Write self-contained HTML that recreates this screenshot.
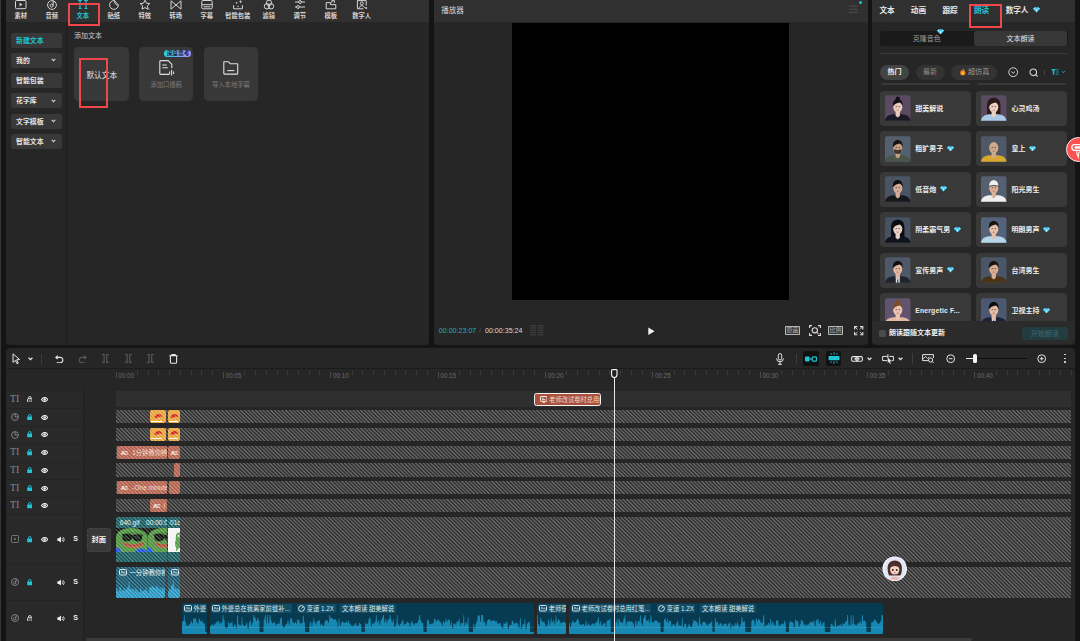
<!DOCTYPE html>
<html lang="zh-CN"><head><meta charset="utf-8"><title>剪映</title>
<style>
html,body{margin:0;padding:0;background:#141414}
body{width:1080px;height:641px;overflow:hidden;position:relative;background:#141414;font-family:"Liberation Sans","Noto Sans CJK SC",sans-serif;-webkit-font-smoothing:antialiased}
div,svg{position:absolute;box-sizing:border-box}
.t{white-space:nowrap;overflow:visible}
.hatch{background-image:repeating-linear-gradient(45deg,rgba(255,255,255,0) 0,rgba(255,255,255,0) .95px,rgba(255,255,255,.25) 1.45px,rgba(255,255,255,.25) 2.15px,rgba(255,255,255,0) 2.65px)}
.clip{overflow:hidden;border-radius:2px}
</style></head><body>

<div style="left:0px;top:0px;width:1px;height:641px;background:#37373a"></div>
<div style="left:5.5px;top:0px;width:423.6px;height:344.5px;background:#262626;border-radius:0 0 4px 4px"></div>
<div style="left:5.5px;top:0px;width:423.6px;height:22px;background:#303030"></div>
<div style="left:66px;top:22px;width:1px;height:322px;background:#1e1e1e"></div>
<svg style="left:14.7px;top:0px;" width="12" height="10.5" viewBox="0 0 12 10.5"><rect x="0.5" y="0.5" width="10.5" height="8.2" rx="1" fill="none" stroke="#d6d6d6"/><path d="M4.6 2.8 L7.4 4.6 L4.6 6.4Z" fill="#d6d6d6"/></svg>
<div class="t" style="left:0.7px;top:12.2px;width:40px;text-align:center;height:8px;line-height:8px;font-size:6.25px;color:#d6d6d6;font-weight:700;">素材</div>
<svg style="left:45.7px;top:0px;" width="12" height="10.5" viewBox="0 0 12 10.5"><circle cx="6" cy="5" r="4.4" fill="none" stroke="#d6d6d6"/><circle cx="5.6" cy="5.6" r="1.5" fill="none" stroke="#d6d6d6"/><path d="M7.1 5.6V1.2l2 .9" fill="none" stroke="#d6d6d6"/></svg>
<div class="t" style="left:31.7px;top:12.2px;width:40px;text-align:center;height:8px;line-height:8px;font-size:6.25px;color:#d6d6d6;font-weight:700;">音频</div>
<svg style="left:76.7px;top:0px;" width="12" height="10.5" viewBox="0 0 12 10.5"><path d="M1 0.3h4M3 0.3v8.2M1.6 8.5h2.8M7 0.3h4M9 0.3v8.2M7.6 8.5h2.8" fill="none" stroke="#1fc4d6" stroke-width="1.2"/></svg>
<div class="t" style="left:62.7px;top:12.2px;width:40px;text-align:center;height:8px;line-height:8px;font-size:6.25px;color:#1fc4d6;font-weight:700;">文本</div>
<svg style="left:107.7px;top:0px;" width="12" height="10.5" viewBox="0 0 12 10.5"><path d="M6.5 0.6A4.4 4.4 0 1 0 10.4 5 C8 5.4 6.2 3.4 6.5 0.6Z" fill="none" stroke="#d6d6d6"/><path d="M6.5 0.6L10.4 5" fill="none" stroke="#d6d6d6"/></svg>
<div class="t" style="left:93.7px;top:12.2px;width:40px;text-align:center;height:8px;line-height:8px;font-size:6.25px;color:#d6d6d6;font-weight:700;">贴纸</div>
<svg style="left:138.7px;top:0px;" width="12" height="10.5" viewBox="0 0 12 10.5"><path d="M6 0.2l1.5 3 3.3.4-2.4 2.3.6 3.3L6 7.6 3 9.2l.6-3.3L1.2 3.6l3.3-.4Z" fill="none" stroke="#d6d6d6" stroke-linejoin="round"/><path d="M9.3 8.6l1 1" stroke="#d6d6d6"/></svg>
<div class="t" style="left:124.7px;top:12.2px;width:40px;text-align:center;height:8px;line-height:8px;font-size:6.25px;color:#d6d6d6;font-weight:700;">特效</div>
<svg style="left:169.7px;top:0px;" width="12" height="10.5" viewBox="0 0 12 10.5"><path d="M1 0.8v8.4l10-8.4v8.4Z" fill="none" stroke="#d6d6d6" stroke-linejoin="round"/></svg>
<div class="t" style="left:155.7px;top:12.2px;width:40px;text-align:center;height:8px;line-height:8px;font-size:6.25px;color:#d6d6d6;font-weight:700;">转场</div>
<svg style="left:200.7px;top:0px;" width="12" height="10.5" viewBox="0 0 12 10.5"><rect x="0.8" y="0.5" width="10.4" height="8.3" rx="1" fill="none" stroke="#d6d6d6"/><path d="M0.8 4.7h10.4M2.6 6.8h6.8" stroke="#d6d6d6"/></svg>
<div class="t" style="left:186.7px;top:12.2px;width:40px;text-align:center;height:8px;line-height:8px;font-size:6.25px;color:#d6d6d6;font-weight:700;">字幕</div>
<svg style="left:231.7px;top:0px;" width="12" height="10.5" viewBox="0 0 12 10.5"><path d="M1.6 5.2v3.6h8.8V5.2" fill="none" stroke="#d6d6d6"/><path d="M8.6 0l.5 1.3 1.3.5-1.3.5-.5 1.3-.5-1.3-1.3-.5 1.3-.5ZM4.6 1.6l.4.9.9.4-.9.4-.4.9-.4-.9-.9-.4.9-.4ZM6 5.4l.3.7.7.3-.7.3-.3.7-.3-.7-.7-.3.7-.3Z" fill="#d6d6d6"/></svg>
<div class="t" style="left:217.7px;top:12.2px;width:40px;text-align:center;height:8px;line-height:8px;font-size:6.25px;color:#d6d6d6;font-weight:700;">智能包装</div>
<svg style="left:262.7px;top:0px;" width="12" height="10.5" viewBox="0 0 12 10.5"><circle cx="6" cy="2.8" r="2.7" fill="none" stroke="#d6d6d6"/><circle cx="4" cy="6.3" r="2.7" fill="none" stroke="#d6d6d6"/><circle cx="8" cy="6.3" r="2.7" fill="none" stroke="#d6d6d6"/></svg>
<div class="t" style="left:248.7px;top:12.2px;width:40px;text-align:center;height:8px;line-height:8px;font-size:6.25px;color:#d6d6d6;font-weight:700;">滤镜</div>
<svg style="left:293.7px;top:0px;" width="12" height="10.5" viewBox="0 0 12 10.5"><path d="M1 2h3.6M7.4 2H11M1 7h1.6M5.4 7H11" stroke="#d6d6d6"/><circle cx="6" cy="2" r="1.4" fill="none" stroke="#d6d6d6"/><circle cx="4" cy="7" r="1.4" fill="none" stroke="#d6d6d6"/></svg>
<div class="t" style="left:279.7px;top:12.2px;width:40px;text-align:center;height:8px;line-height:8px;font-size:6.25px;color:#d6d6d6;font-weight:700;">调节</div>
<svg style="left:324.7px;top:0px;" width="12" height="10.5" viewBox="0 0 12 10.5"><path d="M1.2 2.6h4.2v2h5.4v4.2H1.2Z" fill="none" stroke="#d6d6d6" stroke-linejoin="round"/><path d="M6.8 2.8V0.6h2.6v2.2" fill="none" stroke="#d6d6d6"/></svg>
<div class="t" style="left:310.7px;top:12.2px;width:40px;text-align:center;height:8px;line-height:8px;font-size:6.25px;color:#d6d6d6;font-weight:700;">模板</div>
<svg style="left:355.7px;top:0px;" width="12" height="10.5" viewBox="0 0 12 10.5"><path d="M10.2 5.6V0.6H1.4v8.2h6" fill="none" stroke="#d6d6d6"/><circle cx="5.8" cy="3.4" r="1.5" fill="none" stroke="#d6d6d6"/><path d="M3 8.6c.2-2 1.4-2.8 2.8-2.8s2.4.8 2.8 2" fill="none" stroke="#d6d6d6"/><circle cx="10.2" cy="8" r="1" fill="#d6d6d6"/></svg>
<div class="t" style="left:341.7px;top:12.2px;width:40px;text-align:center;height:8px;line-height:8px;font-size:6.25px;color:#d6d6d6;font-weight:700;">数字人</div>
<div style="left:11px;top:32.5px;width:50.5px;height:15px;background:#383838;border-radius:2.5px"></div>
<div class="t" style="left:16px;top:36.5px;height:8px;line-height:8px;font-size:6.9px;color:#1fc4d6;font-weight:700;">新建文本</div>
<div style="left:11px;top:52.75px;width:50.5px;height:15px;background:#383838;border-radius:2.5px"></div>
<div class="t" style="left:16px;top:56.75px;height:8px;line-height:8px;font-size:6.9px;color:#e4e4e4;font-weight:700;">我的</div>
<svg style="left:51px;top:58.25px;" width="5" height="4" viewBox="0 0 5 4"><path d="M0.7 0.8L2.5 2.6 4.3 0.8" fill="none" stroke="#ccc" stroke-width="1.2"/></svg>
<div style="left:11px;top:73px;width:50.5px;height:15px;background:#383838;border-radius:2.5px"></div>
<div class="t" style="left:16px;top:77px;height:8px;line-height:8px;font-size:6.9px;color:#e4e4e4;font-weight:700;">智能包装</div>
<div style="left:11px;top:93.25px;width:50.5px;height:15px;background:#383838;border-radius:2.5px"></div>
<div class="t" style="left:16px;top:97.25px;height:8px;line-height:8px;font-size:6.9px;color:#e4e4e4;font-weight:700;">花字库</div>
<svg style="left:51px;top:98.75px;" width="5" height="4" viewBox="0 0 5 4"><path d="M0.7 0.8L2.5 2.6 4.3 0.8" fill="none" stroke="#ccc" stroke-width="1.2"/></svg>
<div style="left:11px;top:113.5px;width:50.5px;height:15px;background:#383838;border-radius:2.5px"></div>
<div class="t" style="left:16px;top:117.5px;height:8px;line-height:8px;font-size:6.9px;color:#e4e4e4;font-weight:700;">文字模板</div>
<svg style="left:51px;top:119px;" width="5" height="4" viewBox="0 0 5 4"><path d="M0.7 0.8L2.5 2.6 4.3 0.8" fill="none" stroke="#ccc" stroke-width="1.2"/></svg>
<div style="left:11px;top:133.75px;width:50.5px;height:15px;background:#383838;border-radius:2.5px"></div>
<div class="t" style="left:16px;top:137.75px;height:8px;line-height:8px;font-size:6.9px;color:#e4e4e4;font-weight:700;">智能文本</div>
<svg style="left:51px;top:139.25px;" width="5" height="4" viewBox="0 0 5 4"><path d="M0.7 0.8L2.5 2.6 4.3 0.8" fill="none" stroke="#ccc" stroke-width="1.2"/></svg>
<div class="t" style="left:74px;top:31px;height:9px;line-height:9px;font-size:7px;color:#c8c8c8;font-weight:400;">添加文本</div>
<div style="left:74px;top:46.7px;width:54.6px;height:54.4px;background:#383838;border-radius:4.5px"></div>
<div style="left:138.8px;top:46.7px;width:54.6px;height:54.4px;background:#383838;border-radius:4.5px"></div>
<div style="left:203.6px;top:46.7px;width:54.6px;height:54.4px;background:#383838;border-radius:4.5px"></div>
<div class="t" style="left:74px;top:70.8px;width:54.6px;text-align:center;height:10px;line-height:10px;font-size:7.7px;color:#e6e6e6;font-weight:400;padding-left:1px;">默认文本</div>
<div style="left:164px;top:49.6px;width:27px;height:7.3px;background:linear-gradient(90deg,#25d6f2,#7fa6f6 60%,#b08cf6);border-radius:3.5px"></div>
<div class="t" style="left:163.5px;top:49.6px;width:28px;height:7.3px;line-height:7.3px;font-size:6px;font-weight:700;color:#0c1c3c;text-align:center;transform:scale(.96,.96)">深度思考</div>
<svg style="left:159px;top:60px;" width="16" height="16" viewBox="0 0 16 16"><path d="M10.6 14.4H1.6a.8.8 0 0 1-.8-.8V1.4a.8.8 0 0 1 .8-.8h7.6l3.6 3.6v4" fill="none" stroke="#ddd" stroke-width="1.1"/><path d="M3.4 5h4.4M3.4 7.8h5.4" stroke="#ddd" stroke-width="1.1"/><path d="M10.6 11.6v2.4M12.6 10v5.6M14.6 11.6v2.4" stroke="#ddd" stroke-width="1.1"/></svg>
<div class="t" style="left:138.8px;top:79.9px;width:54.6px;text-align:center;height:9px;line-height:9px;font-size:6.3px;color:#7b7b7b;font-weight:400;">添加口播稿</div>
<svg style="left:223px;top:61px;" width="16" height="14" viewBox="0 0 16 14"><path d="M0.8 12.6V1.2a.5.5 0 0 1 .5-.5h4.2l1.6 2h7.1a.5.5 0 0 1 .5.5v9.4a.5.5 0 0 1-.5.5H1.3a.5.5 0 0 1-.5-.5Z" fill="none" stroke="#ddd" stroke-width="1.1"/><path d="M4.2 9.6h7.2" stroke="#ddd" stroke-width="1.1"/></svg>
<div class="t" style="left:203.6px;top:79.9px;width:54.6px;text-align:center;height:9px;line-height:9px;font-size:6.3px;color:#7b7b7b;font-weight:400;">导入本地字幕</div>
<div style="left:68px;top:3.3px;width:32px;height:22.4px;border:2px solid #f0474d"></div>
<div style="left:78.6px;top:57.6px;width:29.6px;height:50px;border:2px solid #f0474d"></div>
<div style="left:433.6px;top:0px;width:434.8px;height:344.5px;background:#262626;border-radius:0 0 4px 4px"></div>
<div style="left:433.6px;top:0px;width:434.8px;height:22px;background:#303030"></div>
<div class="t" style="left:441.3px;top:5.8px;height:10px;line-height:10px;font-size:7.5px;color:#d8d8d8;font-weight:400;">播放器</div>
<svg style="left:849px;top:5px;" width="9" height="9" viewBox="0 0 9 9"><path d="M0 1h8.6M0 4.2h8.6M0 7.4h8.6" stroke="#4c4c4c" stroke-width="1.1"/></svg>
<div style="left:859px;top:1px;width:3.4px;height:3.4px;background:#1fc4d6;border-radius:50%"></div>
<div style="left:512.2px;top:22.6px;width:277px;height:277.5px;background:#000"></div>
<div class="t" style="left:438.8px;top:325.5px;height:10px;line-height:10px;font-size:7.1px;color:#27a9b8;font-weight:400;">00:00:23:07</div>
<div class="t" style="left:479px;top:325.5px;height:10px;line-height:10px;font-size:7.1px;color:#555;font-weight:400;">/</div>
<div class="t" style="left:485px;top:325.5px;height:10px;line-height:10px;font-size:7.1px;color:#d8d8d8;font-weight:400;">00:00:35:24</div>
<svg style="left:530px;top:325px;" width="14" height="11.5" viewBox="0 0 14 11.5"><rect x="0" y="0" width="6" height="1.4" fill="#3b3b3b"/><rect x="0" y="2.3" width="6" height="1.4" fill="#3b3b3b"/><rect x="0" y="4.6" width="6" height="1.4" fill="#3b3b3b"/><rect x="0" y="6.9" width="6" height="1.4" fill="#3b3b3b"/><rect x="0" y="9.2" width="6" height="1.4" fill="#3b3b3b"/><rect x="7.5" y="0" width="6" height="1.4" fill="#3b3b3b"/><rect x="7.5" y="2.3" width="6" height="1.4" fill="#3b3b3b"/><rect x="7.5" y="4.6" width="6" height="1.4" fill="#3b3b3b"/><rect x="7.5" y="6.9" width="6" height="1.4" fill="#3b3b3b"/><rect x="7.5" y="9.2" width="6" height="1.4" fill="#3b3b3b"/></svg>
<svg style="left:648px;top:326.6px;" width="7" height="8.4" viewBox="0 0 7 8.4"><path d="M0.3 0.4L6.6 4.2 0.3 8Z" fill="#f2f2f2"/></svg>
<div class="t" style="left:785px;top:326px;width:15px;height:9px;border:1px solid #b4b4b4;border-radius:.8px;font-size:6px;line-height:7px;color:#b0b0b0;background:#3a3a3a;text-align:center">原画</div>
<svg style="left:808.5px;top:325px;" width="12" height="11" viewBox="0 0 12 11"><path d="M0.6 3V0.6H3M9 0.6h2.4V3M11.4 8v2.4H9M3 10.4H0.6V8" fill="none" stroke="#ddd" stroke-width="1.1"/><circle cx="5.8" cy="5.3" r="2.6" fill="none" stroke="#ddd" stroke-width="1.1"/><path d="M7.8 7.3l1.5 1.5" stroke="#ddd" stroke-width="1.1"/></svg>
<div class="t" style="left:828px;top:326px;width:15px;height:9px;border:1px solid #b4b4b4;border-radius:.8px;font-size:6px;line-height:7px;color:#b0b0b0;background:#3a3a3a;text-align:center">比例</div>
<svg style="left:854px;top:326px;" width="9.5" height="9.5" viewBox="0 0 9.5 9.5"><path d="M0.6 3.4V0.6h2.8M6 0.6h2.8v2.8M8.8 6v2.8H6M3.4 8.8H0.6V6" fill="none" stroke="#ddd" stroke-width="1.1"/><path d="M0.9 0.9l2.6 2.6M8.5 0.9L5.9 3.5M8.5 8.5L5.9 5.9M0.9 8.5l2.6-2.6" stroke="#ddd" stroke-width="0.9"/></svg>
<div style="left:872px;top:0px;width:203px;height:344.5px;background:#262626;border-radius:0 0 4px 4px"></div>
<div style="left:872px;top:0px;width:203px;height:22px;background:#303030"></div>
<div class="t" style="left:879.5px;top:5.5px;height:10px;line-height:10px;font-size:7.6px;color:#e8e8e8;font-weight:700;">文本</div>
<div class="t" style="left:910.8px;top:5.5px;height:10px;line-height:10px;font-size:7.6px;color:#e8e8e8;font-weight:700;">动画</div>
<div class="t" style="left:942.5px;top:5.5px;height:10px;line-height:10px;font-size:7.6px;color:#e8e8e8;font-weight:700;">跟踪</div>
<div class="t" style="left:974px;top:5.5px;height:10px;line-height:10px;font-size:7.6px;color:#1fc4d6;font-weight:700;">朗读</div>
<div class="t" style="left:1005.7px;top:5.5px;height:10px;line-height:10px;font-size:7.6px;color:#e8e8e8;font-weight:700;">数字人</div>
<svg style="left:1032.5px;top:6.8px;" width="7" height="5.8" viewBox="0 0 7 5.8"><path d="M1.6 0.3h3.8L7 2.1 3.5 5.6 0 2.1Z" fill="#39c8f5"/><path d="M1.6 0.3L2.4 2.1H0ZM5.4 0.3L4.6 2.1H7Z" fill="#8fe4ff"/><path d="M2.4 2.1h2.2L3.5 5.6Z" fill="#b8efff"/></svg>
<div style="left:969px;top:3.5px;width:33px;height:24.5px;border:2px solid #f0474d"></div>
<div style="left:880px;top:31px;width:187.5px;height:15px;background:#1a1a1a;border-radius:2.5px"></div>
<div style="left:973.7px;top:31px;width:93.8px;height:15px;background:#383838;border-radius:2.5px"></div>
<div class="t" style="left:880px;top:34px;width:93.7px;text-align:center;height:9.5px;line-height:9.5px;font-size:7px;color:#9a9a9a;font-weight:400;">克隆音色</div>
<div class="t" style="left:973.7px;top:34px;width:93.8px;text-align:center;height:9.5px;line-height:9.5px;font-size:7px;color:#e6e6e6;font-weight:400;">文本朗读</div>
<svg style="left:936.9px;top:28.6px;" width="7" height="5.8" viewBox="0 0 7 5.8"><path d="M1.6 0.3h3.8L7 2.1 3.5 5.6 0 2.1Z" fill="#39c8f5"/><path d="M1.6 0.3L2.4 2.1H0ZM5.4 0.3L4.6 2.1H7Z" fill="#8fe4ff"/><path d="M2.4 2.1h2.2L3.5 5.6Z" fill="#b8efff"/></svg>
<div style="left:880px;top:53.3px;width:187.5px;height:1px;background:#383838"></div>
<div style="left:880px;top:64.5px;width:29.2px;height:15.4px;background:#434343;border-radius:8px"></div>
<div class="t" style="left:880px;top:67.2px;width:29.2px;text-align:center;height:10px;line-height:10px;font-size:7px;color:#f0f0f0;font-weight:700;">热门</div>
<div style="left:915.5px;top:64.5px;width:29.2px;height:15.4px;background:#333;border-radius:8px"></div>
<div class="t" style="left:915.5px;top:67.2px;width:29.2px;text-align:center;height:10px;line-height:10px;font-size:7px;color:#8c8c8c;font-weight:400;">最新</div>
<div style="left:951px;top:64.5px;width:45.6px;height:15.4px;background:#333;border-radius:8px"></div>
<svg style="left:960.2px;top:68.4px;" width="5.6" height="7.35" viewBox="0 0 6.4 8.4"><path d="M3.4 0.2C3.8 2 6.2 3 6.2 5.4A3 3 0 0 1 0.2 5.4C0.2 3.8 1.2 3.2 1.6 2.2 2.2 3 2.4 3.4 2.6 3.4 3.2 2.6 2.8 1.2 3.4 0.2Z" fill="#f6831f"/><path d="M3.2 4.4C4 5.2 4.6 5.8 4.4 6.8A1.3 1.3 0 0 1 1.9 6.8C1.8 5.8 2.6 5.4 3.2 4.4Z" fill="#ffc53d"/></svg>
<div class="t" style="left:968px;top:67.2px;height:10px;line-height:10px;font-size:7.1px;color:#9c9c9c;font-weight:400;">超仿真</div>
<svg style="left:1007.5px;top:67px;" width="10.4" height="10.4" viewBox="0 0 10.4 10.4"><circle cx="5.2" cy="5.2" r="4.4" fill="none" stroke="#d4d4d4" stroke-width="1"/><path d="M3.4 4.6l1.8 1.7 1.8-1.7" fill="none" stroke="#d4d4d4" stroke-width="1"/></svg>
<svg style="left:1029.3px;top:67.7px;" width="10.5" height="10.5" viewBox="0 0 10.5 10.5"><circle cx="4.3" cy="4.3" r="3.3" fill="none" stroke="#d4d4d4" stroke-width="1.05"/><path d="M6.7 6.7l1.9 1.9" stroke="#d4d4d4" stroke-width="1.05"/></svg>
<div style="left:1044px;top:70px;width:0.9px;height:4.6px;background:#444"></div>
<svg style="left:1051px;top:69.1px;" width="15" height="6.4" viewBox="0 0 15 6.4"><path d="M0 0h5L3.3 2.2V5.8H1.7V2.2Z" fill="#1fb0c2"/><path d="M5 .8h2.6M4.6 3h3.2M4.6 5.2h3.2" stroke="#1fb0c2" stroke-width=".75"/><path d="M11 2.2l1.5 1.5 1.5-1.5" fill="none" stroke="#1fb0c2" stroke-width="1"/></svg>
<div style="left:872px;top:82.5px;width:203px;height:238.3px;overflow:hidden">
<div style="left:8px;top:-32.5px;width:91px;height:35px;background:#393939;border-radius:4px"></div>
<div style="left:104.2px;top:-32.5px;width:91.3px;height:35px;background:#393939;border-radius:4px"></div>
<div style="left:8px;top:8px;width:91px;height:35px;background:#393939;border-radius:4px"></div>
<svg style="left:13px;top:12.5px;" width="25.5" height="26" viewBox="0 0 26 26"><rect width="26" height="26" rx="2" fill="#5c4a63"/><path d="M0 26c.3-4 3.3-5.8 8.5-6.6h9c5.2.8 8.2 2.6 8.5 6.6Z" fill="#1a1a26"/><path d="M10.8 16.5h4.4v4.3l-2.2 1.8-2.2-1.8Z" fill="#e9c9bd"/><ellipse cx="13" cy="11.8" rx="4.7" ry="5.9" fill="#e9c9bd"/><path d="M8.1 11.8c-.7-5.8 2.1-8 4.9-8s5.6 2.2 4.9 8c-.7-2.8-1.6-3.9-3.2-4.3-1.8.7-4.7.7-6.6 4.3Z" fill="#14101a"/><circle cx="13" cy="3.6" r="2.2" fill="#14101a"/><path d="M10.8 11.6h1.4M13.8 11.6h1.4" stroke="#2a1a1a" stroke-width=".7"/><path d="M12 15.2h2" stroke="#a8524a" stroke-width=".7"/></svg>
<div class="t" style="left:43.2px;top:21px;height:10px;line-height:10px;font-size:7px;color:#ececec;font-weight:700;">甜美解说</div>
<div style="left:104.2px;top:8px;width:91.3px;height:35px;background:#393939;border-radius:4px"></div>
<svg style="left:109.2px;top:12.5px;" width="25.5" height="26" viewBox="0 0 26 26"><rect width="26" height="26" rx="2" fill="#5a4a62"/><path d="M6.2 11c0-6.4 3-8.4 6.8-8.4s6.8 2 6.8 8.4v9.5H6.2Z" fill="#2a1a18"/><path d="M0 26c.3-4 3.3-5.8 8.5-6.6h9c5.2.8 8.2 2.6 8.5 6.6Z" fill="#a9c9e6"/><path d="M10.8 16.5h4.4v4.3l-2.2 1.8-2.2-1.8Z" fill="#edd0c4"/><ellipse cx="13" cy="11.8" rx="4.7" ry="5.9" fill="#edd0c4"/><path d="M8.1 11.8c-.7-5.8 2.1-8 4.9-8s5.6 2.2 4.9 8c-.7-2.8-1.6-3.9-3.2-4.3-1.8.7-4.7.7-6.6 4.3Z" fill="#2a1a18"/><path d="M10.8 11.6h1.4M13.8 11.6h1.4" stroke="#2a1a1a" stroke-width=".7"/><path d="M12 15.2h2" stroke="#a8524a" stroke-width=".7"/></svg>
<div class="t" style="left:139.4px;top:21px;height:10px;line-height:10px;font-size:7px;color:#ececec;font-weight:700;">心灵鸡汤</div>
<div style="left:8px;top:48.5px;width:91px;height:35px;background:#393939;border-radius:4px"></div>
<svg style="left:13px;top:53px;" width="25.5" height="26" viewBox="0 0 26 26"><rect width="26" height="26" rx="2" fill="#55606e"/><path d="M0 26c.3-4 3.3-5.8 8.5-6.6h9c5.2.8 8.2 2.6 8.5 6.6Z" fill="#4a5448"/><path d="M10.8 16.5h4.4v4.3l-2.2 1.8-2.2-1.8Z" fill="#c89f84"/><ellipse cx="13" cy="11.8" rx="4.7" ry="5.9" fill="#c89f84"/><path d="M8.1 11.8c-.7-5.8 2.1-8 4.9-8s5.6 2.2 4.9 8c-.7-2.8-1.6-3.9-3.2-4.3-1.8.7-4.7.7-6.6 4.3Z" fill="#17130f"/><path d="M9 13c.5 4 2 5 4 5s3.5-1 4-5c-1.5 1.5-6.5 1.5-8 0Z" fill="#17130f" opacity=".8"/><path d="M10.8 11.6h1.4M13.8 11.6h1.4" stroke="#2a1a1a" stroke-width=".7"/><path d="M12 15.2h2" stroke="#a8524a" stroke-width=".7"/></svg>
<div class="t" style="left:43.2px;top:61.5px;height:10px;line-height:10px;font-size:7px;color:#ececec;font-weight:700;">粗犷男子</div>
<svg style="left:74.8px;top:63.1px" width="7" height="5.8" viewBox="0 0 7 5.8"><path d="M1.6 0.3h3.8L7 2.1 3.5 5.6 0 2.1Z" fill="#39c8f5"/><path d="M1.6 0.3L2.4 2.1H0ZM5.4 0.3L4.6 2.1H7Z" fill="#8fe4ff"/><path d="M2.4 2.1h2.2L3.5 5.6Z" fill="#b8efff"/></svg>
<div style="left:104.2px;top:48.5px;width:91.3px;height:35px;background:#393939;border-radius:4px"></div>
<svg style="left:109.2px;top:53px;" width="25.5" height="26" viewBox="0 0 26 26"><rect width="26" height="26" rx="2" fill="#4e5866"/><path d="M0 26c.3-4 3.3-5.8 8.5-6.6h9c5.2.8 8.2 2.6 8.5 6.6Z" fill="#d8a830"/><path d="M10.8 16.5h4.4v4.3l-2.2 1.8-2.2-1.8Z" fill="#cfa98c"/><ellipse cx="13" cy="11.8" rx="4.7" ry="5.9" fill="#cfa98c"/><path d="M10.8 11.6h1.4M13.8 11.6h1.4" stroke="#2a1a1a" stroke-width=".7"/><path d="M12 15.2h2" stroke="#a8524a" stroke-width=".7"/></svg>
<div class="t" style="left:139.4px;top:61.5px;height:10px;line-height:10px;font-size:7px;color:#ececec;font-weight:700;">皇上</div>
<svg style="left:157px;top:63.1px" width="7" height="5.8" viewBox="0 0 7 5.8"><path d="M1.6 0.3h3.8L7 2.1 3.5 5.6 0 2.1Z" fill="#39c8f5"/><path d="M1.6 0.3L2.4 2.1H0ZM5.4 0.3L4.6 2.1H7Z" fill="#8fe4ff"/><path d="M2.4 2.1h2.2L3.5 5.6Z" fill="#b8efff"/></svg>
<div style="left:8px;top:89px;width:91px;height:35px;background:#393939;border-radius:4px"></div>
<svg style="left:13px;top:93.5px;" width="25.5" height="26" viewBox="0 0 26 26"><rect width="26" height="26" rx="2" fill="#4a5463"/><path d="M0 26c.3-4 3.3-5.8 8.5-6.6h9c5.2.8 8.2 2.6 8.5 6.6Z" fill="#15171c"/><path d="M10.8 16.5h4.4v4.3l-2.2 1.8-2.2-1.8Z" fill="#d6ad94"/><ellipse cx="13" cy="11.8" rx="4.7" ry="5.9" fill="#d6ad94"/><path d="M8.1 11.8c-.7-5.8 2.1-8 4.9-8s5.6 2.2 4.9 8c-.7-2.8-1.6-3.9-3.2-4.3-1.8.7-4.7.7-6.6 4.3Z" fill="#0e0e12"/><path d="M10.8 11.6h1.4M13.8 11.6h1.4" stroke="#2a1a1a" stroke-width=".7"/><path d="M12 15.2h2" stroke="#a8524a" stroke-width=".7"/></svg>
<div class="t" style="left:43.2px;top:102px;height:10px;line-height:10px;font-size:7px;color:#ececec;font-weight:700;">低音炮</div>
<svg style="left:67.8px;top:103.6px" width="7" height="5.8" viewBox="0 0 7 5.8"><path d="M1.6 0.3h3.8L7 2.1 3.5 5.6 0 2.1Z" fill="#39c8f5"/><path d="M1.6 0.3L2.4 2.1H0ZM5.4 0.3L4.6 2.1H7Z" fill="#8fe4ff"/><path d="M2.4 2.1h2.2L3.5 5.6Z" fill="#b8efff"/></svg>
<div style="left:104.2px;top:89px;width:91.3px;height:35px;background:#393939;border-radius:4px"></div>
<svg style="left:109.2px;top:93.5px;" width="25.5" height="26" viewBox="0 0 26 26"><rect width="26" height="26" rx="2" fill="#566070"/><path d="M0 26c.3-4 3.3-5.8 8.5-6.6h9c5.2.8 8.2 2.6 8.5 6.6Z" fill="#eeeeee"/><path d="M10.8 16.5h4.4v4.3l-2.2 1.8-2.2-1.8Z" fill="#dcb195"/><ellipse cx="13" cy="11.8" rx="4.7" ry="5.9" fill="#dcb195"/><path d="M8.3 10.5c0-5 2.5-6.3 4.7-6.3s4.7 1.3 4.7 6.3c-3-1-6.4-1-9.4 0Z" fill="#f1f1f1"/><path d="M8 10.3c3.5-1.3 7.5-1.3 10.5.3" stroke="#222" stroke-width=".8" fill="none"/><path d="M10.8 11.6h1.4M13.8 11.6h1.4" stroke="#2a1a1a" stroke-width=".7"/><path d="M12 15.2h2" stroke="#a8524a" stroke-width=".7"/></svg>
<div class="t" style="left:139.4px;top:102px;height:10px;line-height:10px;font-size:7px;color:#ececec;font-weight:700;">阳光男生</div>
<div style="left:8px;top:129.5px;width:91px;height:35px;background:#393939;border-radius:4px"></div>
<svg style="left:13px;top:134px;" width="25.5" height="26" viewBox="0 0 26 26"><rect width="26" height="26" rx="2" fill="#465262"/><path d="M6.2 11c0-6.4 3-8.4 6.8-8.4s6.8 2 6.8 8.4v9.5H6.2Z" fill="#0a0c12"/><path d="M0 26c.3-4 3.3-5.8 8.5-6.6h9c5.2.8 8.2 2.6 8.5 6.6Z" fill="#10131c"/><path d="M10.8 16.5h4.4v4.3l-2.2 1.8-2.2-1.8Z" fill="#e6cfc6"/><ellipse cx="13" cy="11.8" rx="4.7" ry="5.9" fill="#e6cfc6"/><path d="M8.1 11.8c-.7-5.8 2.1-8 4.9-8s5.6 2.2 4.9 8c-.7-2.8-1.6-3.9-3.2-4.3-1.8.7-4.7.7-6.6 4.3Z" fill="#0a0c12"/><path d="M10.8 11.6h1.4M13.8 11.6h1.4" stroke="#2a1a1a" stroke-width=".7"/><path d="M12 15.2h2" stroke="#a8524a" stroke-width=".7"/></svg>
<div class="t" style="left:43.2px;top:142.5px;height:10px;line-height:10px;font-size:7px;color:#ececec;font-weight:700;">阴柔霸气男</div>
<svg style="left:81.8px;top:144.1px" width="7" height="5.8" viewBox="0 0 7 5.8"><path d="M1.6 0.3h3.8L7 2.1 3.5 5.6 0 2.1Z" fill="#39c8f5"/><path d="M1.6 0.3L2.4 2.1H0ZM5.4 0.3L4.6 2.1H7Z" fill="#8fe4ff"/><path d="M2.4 2.1h2.2L3.5 5.6Z" fill="#b8efff"/></svg>
<div style="left:104.2px;top:129.5px;width:91.3px;height:35px;background:#393939;border-radius:4px"></div>
<svg style="left:109.2px;top:134px;" width="25.5" height="26" viewBox="0 0 26 26"><rect width="26" height="26" rx="2" fill="#54627a"/><path d="M0 26c.3-4 3.3-5.8 8.5-6.6h9c5.2.8 8.2 2.6 8.5 6.6Z" fill="#b5d6e8"/><path d="M10.8 16.5h4.4v4.3l-2.2 1.8-2.2-1.8Z" fill="#e5bfa6"/><ellipse cx="13" cy="11.8" rx="4.7" ry="5.9" fill="#e5bfa6"/><path d="M8.1 11.8c-.7-5.8 2.1-8 4.9-8s5.6 2.2 4.9 8c-.7-2.8-1.6-3.9-3.2-4.3-1.8.7-4.7.7-6.6 4.3Z" fill="#15110f"/><path d="M10.8 11.6h1.4M13.8 11.6h1.4" stroke="#2a1a1a" stroke-width=".7"/><path d="M12 15.2h2" stroke="#a8524a" stroke-width=".7"/></svg>
<div class="t" style="left:139.4px;top:142.5px;height:10px;line-height:10px;font-size:7px;color:#ececec;font-weight:700;">明朗男声</div>
<svg style="left:171px;top:144.1px" width="7" height="5.8" viewBox="0 0 7 5.8"><path d="M1.6 0.3h3.8L7 2.1 3.5 5.6 0 2.1Z" fill="#39c8f5"/><path d="M1.6 0.3L2.4 2.1H0ZM5.4 0.3L4.6 2.1H7Z" fill="#8fe4ff"/><path d="M2.4 2.1h2.2L3.5 5.6Z" fill="#b8efff"/></svg>
<div style="left:8px;top:170px;width:91px;height:35px;background:#393939;border-radius:4px"></div>
<svg style="left:13px;top:174.5px;" width="25.5" height="26" viewBox="0 0 26 26"><rect width="26" height="26" rx="2" fill="#4f5866"/><path d="M0 26c.3-4 3.3-5.8 8.5-6.6h9c5.2.8 8.2 2.6 8.5 6.6Z" fill="#20242c"/><path d="M10.8 16.5h4.4v4.3l-2.2 1.8-2.2-1.8Z" fill="#e0b9a0"/><ellipse cx="13" cy="11.8" rx="4.7" ry="5.9" fill="#e0b9a0"/><path d="M8.1 11.8c-.7-5.8 2.1-8 4.9-8s5.6 2.2 4.9 8c-.7-2.8-1.6-3.9-3.2-4.3-1.8.7-4.7.7-6.6 4.3Z" fill="#0f0d0d"/><path d="M11 20.5l2 2.2 2-2.2v5.5h-4Z" fill="#e9e9ee"/><path d="M12.6 22.4h.8l.5 3.6h-1.8Z" fill="#2a3a5a"/><path d="M10.8 11.6h1.4M13.8 11.6h1.4" stroke="#2a1a1a" stroke-width=".7"/><path d="M12 15.2h2" stroke="#a8524a" stroke-width=".7"/></svg>
<div class="t" style="left:43.2px;top:183px;height:10px;line-height:10px;font-size:7px;color:#ececec;font-weight:700;">宣传男声</div>
<svg style="left:74.8px;top:184.6px" width="7" height="5.8" viewBox="0 0 7 5.8"><path d="M1.6 0.3h3.8L7 2.1 3.5 5.6 0 2.1Z" fill="#39c8f5"/><path d="M1.6 0.3L2.4 2.1H0ZM5.4 0.3L4.6 2.1H7Z" fill="#8fe4ff"/><path d="M2.4 2.1h2.2L3.5 5.6Z" fill="#b8efff"/></svg>
<div style="left:104.2px;top:170px;width:91.3px;height:35px;background:#393939;border-radius:4px"></div>
<svg style="left:109.2px;top:174.5px;" width="25.5" height="26" viewBox="0 0 26 26"><rect width="26" height="26" rx="2" fill="#4a5668"/><path d="M0 26c.3-4 3.3-5.8 8.5-6.6h9c5.2.8 8.2 2.6 8.5 6.6Z" fill="#4a3418"/><path d="M10.8 16.5h4.4v4.3l-2.2 1.8-2.2-1.8Z" fill="#d9ad90"/><ellipse cx="13" cy="11.8" rx="4.7" ry="5.9" fill="#d9ad90"/><path d="M8.1 11.8c-.7-5.8 2.1-8 4.9-8s5.6 2.2 4.9 8c-.7-2.8-1.6-3.9-3.2-4.3-1.8.7-4.7.7-6.6 4.3Z" fill="#1a120e"/><path d="M10.8 11.6h1.4M13.8 11.6h1.4" stroke="#2a1a1a" stroke-width=".7"/><path d="M12 15.2h2" stroke="#a8524a" stroke-width=".7"/></svg>
<div class="t" style="left:139.4px;top:183px;height:10px;line-height:10px;font-size:7px;color:#ececec;font-weight:700;">台湾男生</div>
<div style="left:8px;top:210.5px;width:91px;height:35px;background:#393939;border-radius:4px"></div>
<svg style="left:13px;top:215px;" width="25.5" height="26" viewBox="0 0 26 26"><rect width="26" height="26" rx="2" fill="#62546e"/><path d="M0 26c.3-4 3.3-5.8 8.5-6.6h9c5.2.8 8.2 2.6 8.5 6.6Z" fill="#e2b8a4"/><path d="M10.8 16.5h4.4v4.3l-2.2 1.8-2.2-1.8Z" fill="#ecc4b0"/><ellipse cx="13" cy="11.8" rx="4.7" ry="5.9" fill="#ecc4b0"/><path d="M8.1 11.8c-.7-5.8 2.1-8 4.9-8s5.6 2.2 4.9 8c-.7-2.8-1.6-3.9-3.2-4.3-1.8.7-4.7.7-6.6 4.3Z" fill="#7a4e2a"/><circle cx="13" cy="3.6" r="2.2" fill="#7a4e2a"/><path d="M10.8 11.6h1.4M13.8 11.6h1.4" stroke="#2a1a1a" stroke-width=".7"/><path d="M12 15.2h2" stroke="#a8524a" stroke-width=".7"/></svg>
<div class="t" style="left:43.2px;top:223.5px;height:10px;line-height:10px;font-size:6.8px;color:#ececec;font-weight:700;letter-spacing:.2px;">Energetic F...</div>
<div style="left:104.2px;top:210.5px;width:91.3px;height:35px;background:#393939;border-radius:4px"></div>
<svg style="left:109.2px;top:215px;" width="25.5" height="26" viewBox="0 0 26 26"><rect width="26" height="26" rx="2" fill="#4c5870"/><path d="M0 26c.3-4 3.3-5.8 8.5-6.6h9c5.2.8 8.2 2.6 8.5 6.6Z" fill="#1a2236"/><path d="M10.8 16.5h4.4v4.3l-2.2 1.8-2.2-1.8Z" fill="#e4bca4"/><ellipse cx="13" cy="11.8" rx="4.7" ry="5.9" fill="#e4bca4"/><path d="M8.1 11.8c-.7-5.8 2.1-8 4.9-8s5.6 2.2 4.9 8c-.7-2.8-1.6-3.9-3.2-4.3-1.8.7-4.7.7-6.6 4.3Z" fill="#0d0c0e"/><path d="M11 20.5l2 2.2 2-2.2v5.5h-4Z" fill="#e9e9ee"/><path d="M12.6 22.4h.8l.5 3.6h-1.8Z" fill="#2a3a5a"/><path d="M10.8 11.6h1.4M13.8 11.6h1.4" stroke="#2a1a1a" stroke-width=".7"/><path d="M12 15.2h2" stroke="#a8524a" stroke-width=".7"/></svg>
<div class="t" style="left:139.4px;top:223.5px;height:10px;line-height:10px;font-size:7px;color:#ececec;font-weight:700;">卫视主持</div>
<svg style="left:171px;top:225.1px" width="7" height="5.8" viewBox="0 0 7 5.8"><path d="M1.6 0.3h3.8L7 2.1 3.5 5.6 0 2.1Z" fill="#39c8f5"/><path d="M1.6 0.3L2.4 2.1H0ZM5.4 0.3L4.6 2.1H7Z" fill="#8fe4ff"/><path d="M2.4 2.1h2.2L3.5 5.6Z" fill="#b8efff"/></svg>
</div>
<div style="left:872px;top:320.8px;width:203px;height:23.7px;background:#2b2b2b;border-radius:0 0 4px 4px"></div>
<div style="left:878.8px;top:330px;width:7px;height:7px;background:#4b4b4b;border-radius:1.5px"></div>
<div class="t" style="left:889px;top:328.3px;height:10px;line-height:10px;font-size:7px;color:#f0f0f0;font-weight:700;">朗读跟随文本更新</div>
<div style="left:1022px;top:327px;width:45.5px;height:12.6px;background:#223c40;border-radius:2px"></div>
<div class="t" style="left:1022px;top:328.5px;width:45.5px;text-align:center;height:10px;line-height:10px;font-size:7px;color:#3f6a70;font-weight:400;">开始朗读</div>
<div style="left:1066px;top:136.5px;width:25.8px;height:25.8px;background:#fb5254;border:.9px solid #ffe9e9;border-radius:50%"></div>
<svg style="left:1070px;top:142.7px;" width="10" height="18" viewBox="0 0 10 18"><path d="M10 1.7H4.6a2.8 2.8 0 0 0 0 5.6H10" fill="none" stroke="#fff" stroke-width="1.3"/><path d="M10 3.3H5.6a1.2 1.2 0 0 0 0 2.4H10Z" fill="#fff"/><path d="M7 7.6c-.6 2.2-.2 4.2 1.4 6.2-.2-1.8 0-3.6 1.2-5.4" fill="none" stroke="#fff" stroke-width="1.1"/></svg>
<div style="left:5.5px;top:348px;width:1069.5px;height:300px;background:#262626;border-radius:4px 4px 0 0"></div>
<div style="left:5.5px;top:367.8px;width:1069.5px;height:1px;background:#1c1c1c"></div>
<svg style="left:11.5px;top:353.4px;" width="9" height="11" viewBox="0 0 9 11"><path d="M1 0.8l6.6 5.7-3 .3 1.7 3.4-1.3.6-1.6-3.4L1 9.4Z" fill="none" stroke="#e6e6e6" stroke-width="1" stroke-linejoin="round"/></svg>
<svg style="left:27.8px;top:357px;" width="5" height="4" viewBox="0 0 5 4"><path d="M0.6 0.8L2.5 2.7 4.4 0.8" fill="none" stroke="#e6e6e6" stroke-width="1.3"/></svg>
<div style="left:41px;top:354px;width:0.8px;height:9.5px;background:#3c3c3c"></div>
<svg style="left:55px;top:354.6px;" width="9" height="8.6" viewBox="0 0 9 8.6"><path d="M2.8 0.6L0.8 2.4l2 1.8M1 2.4h4.2a2.7 2.7 0 0 1 0 5.4H1.6" fill="none" stroke="#e6e6e6" stroke-width="1.1"/></svg>
<svg style="left:77.5px;top:354.6px;" width="9" height="8.6" viewBox="0 0 9 8.6"><path d="M6.2 0.6l2 1.8-2 1.8M8 2.4H3.8a2.7 2.7 0 0 0 0 5.4h3.6" fill="none" stroke="#595959" stroke-width="1.1"/></svg>
<svg style="left:101.5px;top:354.3px;" width="7" height="9" viewBox="0 0 7 9"><path d="M0.2 0.6h1.9v7.8h-1.9M6.6 0.6h-1.9v7.8h1.9" fill="none" stroke="#595959" stroke-width="1.1"/></svg>
<svg style="left:124.8px;top:354.3px;" width="7" height="9" viewBox="0 0 7 9"><path d="M0.2 0.6h1.9v7.8h-1.9M6.6 0.6h-1.9v7.8h1.9" fill="none" stroke="#595959" stroke-width="1.1"/></svg>
<svg style="left:147.2px;top:354.3px;" width="7" height="9" viewBox="0 0 7 9"><path d="M0.2 0.6h1.9v7.8h-1.9M6.6 0.6h-1.9v7.8h1.9" fill="none" stroke="#595959" stroke-width="1.1"/></svg>
<svg style="left:169.3px;top:353.8px;" width="9" height="10" viewBox="0 0 9 10"><path d="M0.3 1.8h8.4M2.8 1.6V0.6h3.4v1M1.4 1.8v6.8a.6.6 0 0 0 .6.6h5a.6.6 0 0 0 .6-.6V1.8" fill="none" stroke="#e6e6e6" stroke-width="1.1"/></svg>
<svg style="left:776px;top:352.8px;" width="8" height="12" viewBox="0 0 8 12"><rect x="2.3" y="0.6" width="3.4" height="6.4" rx="1.7" fill="none" stroke="#e6e6e6" stroke-width="1"/><path d="M0.6 5.4a3.4 3.4 0 0 0 6.8 0M4 8.8v2.4M2.2 11.3h3.6" fill="none" stroke="#e6e6e6" stroke-width="1"/></svg>
<div style="left:795.6px;top:354px;width:0.8px;height:9.5px;background:#3c3c3c"></div>
<div style="left:802.5px;top:351px;width:16px;height:14.5px;background:#111;border-radius:2px"></div>
<svg style="left:804.5px;top:355.5px;" width="12" height="6" viewBox="0 0 12 6"><rect x="0" y="0.6" width="4.6" height="4.8" rx=".8" fill="#1fc4d6"/><path d="M4.6 3h2.6" stroke="#1fc4d6" stroke-width="1.2"/><rect x="7.2" y="0.9" width="4.3" height="4.2" rx="1" fill="none" stroke="#1fc4d6" stroke-width="1.2"/></svg>
<div style="left:826px;top:351px;width:15.2px;height:14.5px;background:#111;border-radius:2px"></div>
<svg style="left:827.6px;top:352.4px;" width="12" height="12" viewBox="0 0 12 12"><rect x="0.5" y="4" width="11" height="4.2" rx=".8" fill="#1fc4d6"/><path d="M6 0.3v2.4M6 9.4v2.4M2.6 1l1 1.6M9.4 1l-1 1.6M2.6 11l1-1.6M9.4 11l-1-1.6" stroke="#1fc4d6" stroke-width=".9"/></svg>
<svg style="left:850.6px;top:355.6px;" width="12" height="6" viewBox="0 0 12 6"><rect x="0.6" y="0.6" width="6.4" height="4.6" rx="1.4" fill="none" stroke="#e6e6e6" stroke-width="1.1"/><rect x="5" y="0.6" width="6.4" height="4.6" rx="1.4" fill="none" stroke="#e6e6e6" stroke-width="1.1"/><path d="M3.2 2.9h5.6" stroke="#e6e6e6" stroke-width="1.1"/></svg>
<svg style="left:866.8px;top:357px;" width="5" height="4" viewBox="0 0 5 4"><path d="M0.6 0.8L2.5 2.7 4.4 0.8" fill="none" stroke="#e6e6e6" stroke-width="1.3"/></svg>
<svg style="left:881.8px;top:353.8px;" width="12.5" height="10" viewBox="0 0 12.5 10"><path d="M5.6 2.4H0.6v4.2h4.6M7.4 2.4h4v4.2H9.8" fill="none" stroke="#e6e6e6" stroke-width="1"/><path d="M5.9 0.2v4" stroke="#e6e6e6" stroke-width="1"/><path d="M5.7 3.6l4.2 3.6-2 .2 1 2.1-.9.4-1-2.1-1.3 1.3Z" fill="#e6e6e6"/></svg>
<svg style="left:898.3px;top:357px;" width="5" height="4" viewBox="0 0 5 4"><path d="M0.6 0.8L2.5 2.7 4.4 0.8" fill="none" stroke="#e6e6e6" stroke-width="1.3"/></svg>
<div style="left:912.3px;top:353.2px;width:0.8px;height:10.5px;background:#3c3c3c"></div>
<svg style="left:921.6px;top:354.2px;" width="12" height="9.5" viewBox="0 0 12 9.5"><path d="M6.4 6.6H0.6V0.6h10.8v3.4" fill="none" stroke="#e6e6e6" stroke-width="1"/><path d="M1.2 5l2.4-2.6 2 2 1.6-1.4" fill="none" stroke="#e6e6e6" stroke-width=".9"/><circle cx="8.6" cy="6" r="2.1" fill="none" stroke="#e6e6e6" stroke-width="1"/><path d="M10.2 7.6l1.4 1.4" stroke="#e6e6e6" stroke-width="1"/></svg>
<svg style="left:946.2px;top:354px;" width="9.4" height="9.4" viewBox="0 0 9.4 9.4"><circle cx="4.7" cy="4.7" r="3.9" fill="none" stroke="#e6e6e6" stroke-width="1"/><path d="M2.9 4.7h3.6" stroke="#e6e6e6" stroke-width="1"/></svg>
<div style="left:966px;top:358px;width:61px;height:1px;background:#0e0e0e"></div>
<div style="left:966px;top:357.8px;width:8px;height:1.3px;background:#eee"></div>
<div style="left:972.5px;top:354px;width:4.6px;height:8.6px;background:#f4f4f4;border-radius:1.6px"></div>
<svg style="left:1037.3px;top:354px;" width="9.4" height="9.4" viewBox="0 0 9.4 9.4"><circle cx="4.7" cy="4.7" r="3.9" fill="none" stroke="#e6e6e6" stroke-width="1"/><path d="M2.9 4.7h3.6M4.7 2.9v3.6" stroke="#e6e6e6" stroke-width="1"/></svg>
<div style="left:1064px;top:353.8px;width:1.5px;height:1.5px;background:#e6e6e6;border-radius:50%"></div>
<div style="left:1064px;top:357.6px;width:1.5px;height:1.5px;background:#e6e6e6;border-radius:50%"></div>
<div style="left:1064px;top:361.4px;width:1.5px;height:1.5px;background:#e6e6e6;border-radius:50%"></div>
<div style="left:115.5px;top:372px;width:0.9px;height:6.2px;background:#4a4a4a"></div>
<div class="t" style="left:118.3px;top:370.8px;height:9px;line-height:9px;font-size:6.3px;color:#6c6c6c;font-weight:400;background:#262626;padding-right:1.5px;">00:00</div>
<div style="left:136.97px;top:371.4px;width:0.9px;height:3.8px;background:#3c3c3c"></div>
<div style="left:147.705px;top:371.4px;width:0.9px;height:3.8px;background:#3c3c3c"></div>
<div style="left:158.44px;top:371.4px;width:0.9px;height:3.8px;background:#3c3c3c"></div>
<div style="left:169.175px;top:371.4px;width:0.9px;height:3.8px;background:#3c3c3c"></div>
<div style="left:179.91px;top:371.4px;width:0.9px;height:3.8px;background:#3c3c3c"></div>
<div style="left:190.645px;top:371.4px;width:0.9px;height:3.8px;background:#3c3c3c"></div>
<div style="left:201.38px;top:371.4px;width:0.9px;height:3.8px;background:#3c3c3c"></div>
<div style="left:212.115px;top:371.4px;width:0.9px;height:3.8px;background:#3c3c3c"></div>
<div style="left:222.85px;top:372px;width:0.9px;height:6.2px;background:#4a4a4a"></div>
<div class="t" style="left:225.65px;top:370.8px;height:9px;line-height:9px;font-size:6.3px;color:#6c6c6c;font-weight:400;background:#262626;padding-right:1.5px;">00:05</div>
<div style="left:244.32px;top:371.4px;width:0.9px;height:3.8px;background:#3c3c3c"></div>
<div style="left:255.055px;top:371.4px;width:0.9px;height:3.8px;background:#3c3c3c"></div>
<div style="left:265.79px;top:371.4px;width:0.9px;height:3.8px;background:#3c3c3c"></div>
<div style="left:276.525px;top:371.4px;width:0.9px;height:3.8px;background:#3c3c3c"></div>
<div style="left:287.26px;top:371.4px;width:0.9px;height:3.8px;background:#3c3c3c"></div>
<div style="left:297.995px;top:371.4px;width:0.9px;height:3.8px;background:#3c3c3c"></div>
<div style="left:308.73px;top:371.4px;width:0.9px;height:3.8px;background:#3c3c3c"></div>
<div style="left:319.465px;top:371.4px;width:0.9px;height:3.8px;background:#3c3c3c"></div>
<div style="left:330.2px;top:372px;width:0.9px;height:6.2px;background:#4a4a4a"></div>
<div class="t" style="left:333px;top:370.8px;height:9px;line-height:9px;font-size:6.3px;color:#6c6c6c;font-weight:400;background:#262626;padding-right:1.5px;">00:10</div>
<div style="left:351.67px;top:371.4px;width:0.9px;height:3.8px;background:#3c3c3c"></div>
<div style="left:362.405px;top:371.4px;width:0.9px;height:3.8px;background:#3c3c3c"></div>
<div style="left:373.14px;top:371.4px;width:0.9px;height:3.8px;background:#3c3c3c"></div>
<div style="left:383.875px;top:371.4px;width:0.9px;height:3.8px;background:#3c3c3c"></div>
<div style="left:394.61px;top:371.4px;width:0.9px;height:3.8px;background:#3c3c3c"></div>
<div style="left:405.345px;top:371.4px;width:0.9px;height:3.8px;background:#3c3c3c"></div>
<div style="left:416.08px;top:371.4px;width:0.9px;height:3.8px;background:#3c3c3c"></div>
<div style="left:426.815px;top:371.4px;width:0.9px;height:3.8px;background:#3c3c3c"></div>
<div style="left:437.55px;top:372px;width:0.9px;height:6.2px;background:#4a4a4a"></div>
<div class="t" style="left:440.35px;top:370.8px;height:9px;line-height:9px;font-size:6.3px;color:#6c6c6c;font-weight:400;background:#262626;padding-right:1.5px;">00:15</div>
<div style="left:459.02px;top:371.4px;width:0.9px;height:3.8px;background:#3c3c3c"></div>
<div style="left:469.755px;top:371.4px;width:0.9px;height:3.8px;background:#3c3c3c"></div>
<div style="left:480.49px;top:371.4px;width:0.9px;height:3.8px;background:#3c3c3c"></div>
<div style="left:491.225px;top:371.4px;width:0.9px;height:3.8px;background:#3c3c3c"></div>
<div style="left:501.96px;top:371.4px;width:0.9px;height:3.8px;background:#3c3c3c"></div>
<div style="left:512.695px;top:371.4px;width:0.9px;height:3.8px;background:#3c3c3c"></div>
<div style="left:523.43px;top:371.4px;width:0.9px;height:3.8px;background:#3c3c3c"></div>
<div style="left:534.165px;top:371.4px;width:0.9px;height:3.8px;background:#3c3c3c"></div>
<div style="left:544.9px;top:372px;width:0.9px;height:6.2px;background:#4a4a4a"></div>
<div class="t" style="left:547.7px;top:370.8px;height:9px;line-height:9px;font-size:6.3px;color:#6c6c6c;font-weight:400;background:#262626;padding-right:1.5px;">00:20</div>
<div style="left:566.37px;top:371.4px;width:0.9px;height:3.8px;background:#3c3c3c"></div>
<div style="left:577.105px;top:371.4px;width:0.9px;height:3.8px;background:#3c3c3c"></div>
<div style="left:587.84px;top:371.4px;width:0.9px;height:3.8px;background:#3c3c3c"></div>
<div style="left:598.575px;top:371.4px;width:0.9px;height:3.8px;background:#3c3c3c"></div>
<div style="left:609.31px;top:371.4px;width:0.9px;height:3.8px;background:#3c3c3c"></div>
<div style="left:620.045px;top:371.4px;width:0.9px;height:3.8px;background:#3c3c3c"></div>
<div style="left:630.78px;top:371.4px;width:0.9px;height:3.8px;background:#3c3c3c"></div>
<div style="left:641.515px;top:371.4px;width:0.9px;height:3.8px;background:#3c3c3c"></div>
<div style="left:652.25px;top:372px;width:0.9px;height:6.2px;background:#4a4a4a"></div>
<div class="t" style="left:655.05px;top:370.8px;height:9px;line-height:9px;font-size:6.3px;color:#6c6c6c;font-weight:400;background:#262626;padding-right:1.5px;">00:25</div>
<div style="left:673.72px;top:371.4px;width:0.9px;height:3.8px;background:#3c3c3c"></div>
<div style="left:684.455px;top:371.4px;width:0.9px;height:3.8px;background:#3c3c3c"></div>
<div style="left:695.19px;top:371.4px;width:0.9px;height:3.8px;background:#3c3c3c"></div>
<div style="left:705.925px;top:371.4px;width:0.9px;height:3.8px;background:#3c3c3c"></div>
<div style="left:716.66px;top:371.4px;width:0.9px;height:3.8px;background:#3c3c3c"></div>
<div style="left:727.395px;top:371.4px;width:0.9px;height:3.8px;background:#3c3c3c"></div>
<div style="left:738.13px;top:371.4px;width:0.9px;height:3.8px;background:#3c3c3c"></div>
<div style="left:748.865px;top:371.4px;width:0.9px;height:3.8px;background:#3c3c3c"></div>
<div style="left:759.6px;top:372px;width:0.9px;height:6.2px;background:#4a4a4a"></div>
<div class="t" style="left:762.4px;top:370.8px;height:9px;line-height:9px;font-size:6.3px;color:#6c6c6c;font-weight:400;background:#262626;padding-right:1.5px;">00:30</div>
<div style="left:781.07px;top:371.4px;width:0.9px;height:3.8px;background:#3c3c3c"></div>
<div style="left:791.805px;top:371.4px;width:0.9px;height:3.8px;background:#3c3c3c"></div>
<div style="left:802.54px;top:371.4px;width:0.9px;height:3.8px;background:#3c3c3c"></div>
<div style="left:813.275px;top:371.4px;width:0.9px;height:3.8px;background:#3c3c3c"></div>
<div style="left:824.01px;top:371.4px;width:0.9px;height:3.8px;background:#3c3c3c"></div>
<div style="left:834.745px;top:371.4px;width:0.9px;height:3.8px;background:#3c3c3c"></div>
<div style="left:845.48px;top:371.4px;width:0.9px;height:3.8px;background:#3c3c3c"></div>
<div style="left:856.215px;top:371.4px;width:0.9px;height:3.8px;background:#3c3c3c"></div>
<div style="left:866.95px;top:372px;width:0.9px;height:6.2px;background:#4a4a4a"></div>
<div class="t" style="left:869.75px;top:370.8px;height:9px;line-height:9px;font-size:6.3px;color:#6c6c6c;font-weight:400;background:#262626;padding-right:1.5px;">00:35</div>
<div style="left:888.42px;top:371.4px;width:0.9px;height:3.8px;background:#3c3c3c"></div>
<div style="left:899.155px;top:371.4px;width:0.9px;height:3.8px;background:#3c3c3c"></div>
<div style="left:909.89px;top:371.4px;width:0.9px;height:3.8px;background:#3c3c3c"></div>
<div style="left:920.625px;top:371.4px;width:0.9px;height:3.8px;background:#3c3c3c"></div>
<div style="left:931.36px;top:371.4px;width:0.9px;height:3.8px;background:#3c3c3c"></div>
<div style="left:942.095px;top:371.4px;width:0.9px;height:3.8px;background:#3c3c3c"></div>
<div style="left:952.83px;top:371.4px;width:0.9px;height:3.8px;background:#3c3c3c"></div>
<div style="left:963.565px;top:371.4px;width:0.9px;height:3.8px;background:#3c3c3c"></div>
<div style="left:974.3px;top:372px;width:0.9px;height:6.2px;background:#4a4a4a"></div>
<div class="t" style="left:977.1px;top:370.8px;height:9px;line-height:9px;font-size:6.3px;color:#6c6c6c;font-weight:400;background:#262626;padding-right:1.5px;">00:40</div>
<div style="left:995.77px;top:371.4px;width:0.9px;height:3.8px;background:#3c3c3c"></div>
<div style="left:1006.5px;top:371.4px;width:0.9px;height:3.8px;background:#3c3c3c"></div>
<div style="left:1017.24px;top:371.4px;width:0.9px;height:3.8px;background:#3c3c3c"></div>
<div style="left:1027.97px;top:371.4px;width:0.9px;height:3.8px;background:#3c3c3c"></div>
<div style="left:1038.71px;top:371.4px;width:0.9px;height:3.8px;background:#3c3c3c"></div>
<div style="left:1049.44px;top:371.4px;width:0.9px;height:3.8px;background:#3c3c3c"></div>
<div style="left:1060.18px;top:371.4px;width:0.9px;height:3.8px;background:#3c3c3c"></div>
<div style="left:1070.91px;top:371.4px;width:0.9px;height:3.8px;background:#3c3c3c"></div>
<div style="left:5.5px;top:391px;width:78px;height:250px;background:#292929"></div>
<div style="left:83.3px;top:387px;width:0.9px;height:254px;background:#1f1f1f"></div>
<div style="left:5.5px;top:408.3px;width:78px;height:0.9px;background:#232323"></div>
<div style="left:5.5px;top:426px;width:78px;height:0.9px;background:#232323"></div>
<div style="left:5.5px;top:443.8px;width:78px;height:0.9px;background:#232323"></div>
<div style="left:5.5px;top:461.5px;width:78px;height:0.9px;background:#232323"></div>
<div style="left:5.5px;top:479px;width:78px;height:0.9px;background:#232323"></div>
<div style="left:5.5px;top:496.5px;width:78px;height:0.9px;background:#232323"></div>
<div style="left:5.5px;top:514.2px;width:78px;height:0.9px;background:#232323"></div>
<div style="left:5.5px;top:564px;width:78px;height:0.9px;background:#232323"></div>
<div style="left:5.5px;top:600px;width:78px;height:0.9px;background:#232323"></div>
<div class="t" style="left:9.8px;top:393.9px;height:10px;line-height:10px;font-size:10.5px;color:#858585;font-family:'Liberation Serif',serif;letter-spacing:-.2px;transform-origin:0 50%;transform:scale(.95,.9)">TI</div>
<svg style="left:26.8px;top:395.9px;" width="5.6" height="6.5" viewBox="0 0 6 7"><rect x="0.6" y="3" width="4.8" height="3.6" rx=".7" fill="none" stroke="#eee" stroke-width="1"/><path d="M1.6 3V2a1.4 1.4 0 0 1 2.8 0v1" fill="none" stroke="#eee" stroke-width="1"/><path d="M3 4.3v1" stroke="#eee" stroke-width=".8"/></svg>
<svg style="left:41.1px;top:396.8px;" width="7.2" height="5" viewBox="0 0 8 5.6"><path d="M0.4 2.8C1.6 1 2.7 0.5 4 0.5S6.4 1 7.6 2.8C6.4 4.6 5.3 5.1 4 5.1S1.6 4.6 0.4 2.8Z" fill="none" stroke="#eee" stroke-width="1.15"/><circle cx="4" cy="2.8" r="1.4" fill="#eee"/></svg>
<svg style="left:10.5px;top:413px;" width="8" height="8" viewBox="0 0 8 8"><circle cx="4" cy="4" r="3.4" fill="none" stroke="#8a8a8a" stroke-width=".9"/><path d="M4 0.6V4h3.4" fill="none" stroke="#8a8a8a" stroke-width=".9"/></svg>
<svg style="left:26.8px;top:413.7px;" width="5.6" height="6.5" viewBox="0 0 6 7"><rect x="0.2" y="2.8" width="5.6" height="4" rx=".7" fill="#1fc4d6"/><path d="M1.5 3V2a1.5 1.5 0 0 1 3 0v1" fill="none" stroke="#1fc4d6" stroke-width="1"/></svg>
<svg style="left:41.1px;top:414.6px;" width="7.2" height="5" viewBox="0 0 8 5.6"><path d="M0.4 2.8C1.6 1 2.7 0.5 4 0.5S6.4 1 7.6 2.8C6.4 4.6 5.3 5.1 4 5.1S1.6 4.6 0.4 2.8Z" fill="none" stroke="#eee" stroke-width="1.15"/><circle cx="4" cy="2.8" r="1.4" fill="#eee"/></svg>
<svg style="left:10.5px;top:430.7px;" width="8" height="8" viewBox="0 0 8 8"><circle cx="4" cy="4" r="3.4" fill="none" stroke="#8a8a8a" stroke-width=".9"/><path d="M4 0.6V4h3.4" fill="none" stroke="#8a8a8a" stroke-width=".9"/></svg>
<svg style="left:26.8px;top:431.4px;" width="5.6" height="6.5" viewBox="0 0 6 7"><rect x="0.2" y="2.8" width="5.6" height="4" rx=".7" fill="#1fc4d6"/><path d="M1.5 3V2a1.5 1.5 0 0 1 3 0v1" fill="none" stroke="#1fc4d6" stroke-width="1"/></svg>
<svg style="left:41.1px;top:432.3px;" width="7.2" height="5" viewBox="0 0 8 5.6"><path d="M0.4 2.8C1.6 1 2.7 0.5 4 0.5S6.4 1 7.6 2.8C6.4 4.6 5.3 5.1 4 5.1S1.6 4.6 0.4 2.8Z" fill="none" stroke="#eee" stroke-width="1.15"/><circle cx="4" cy="2.8" r="1.4" fill="#eee"/></svg>
<div class="t" style="left:9.8px;top:447.2px;height:10px;line-height:10px;font-size:10.5px;color:#858585;font-family:'Liberation Serif',serif;letter-spacing:-.2px;transform-origin:0 50%;transform:scale(.95,.9)">TI</div>
<svg style="left:26.8px;top:449.2px;" width="5.6" height="6.5" viewBox="0 0 6 7"><rect x="0.2" y="2.8" width="5.6" height="4" rx=".7" fill="#1fc4d6"/><path d="M1.5 3V2a1.5 1.5 0 0 1 3 0v1" fill="none" stroke="#1fc4d6" stroke-width="1"/></svg>
<svg style="left:41.1px;top:450.1px;" width="7.2" height="5" viewBox="0 0 8 5.6"><path d="M0.4 2.8C1.6 1 2.7 0.5 4 0.5S6.4 1 7.6 2.8C6.4 4.6 5.3 5.1 4 5.1S1.6 4.6 0.4 2.8Z" fill="none" stroke="#eee" stroke-width="1.15"/><circle cx="4" cy="2.8" r="1.4" fill="#eee"/></svg>
<div class="t" style="left:9.8px;top:464.9px;height:10px;line-height:10px;font-size:10.5px;color:#858585;font-family:'Liberation Serif',serif;letter-spacing:-.2px;transform-origin:0 50%;transform:scale(.95,.9)">TI</div>
<svg style="left:26.8px;top:466.9px;" width="5.6" height="6.5" viewBox="0 0 6 7"><rect x="0.2" y="2.8" width="5.6" height="4" rx=".7" fill="#1fc4d6"/><path d="M1.5 3V2a1.5 1.5 0 0 1 3 0v1" fill="none" stroke="#1fc4d6" stroke-width="1"/></svg>
<svg style="left:41.1px;top:467.8px;" width="7.2" height="5" viewBox="0 0 8 5.6"><path d="M0.4 2.8C1.6 1 2.7 0.5 4 0.5S6.4 1 7.6 2.8C6.4 4.6 5.3 5.1 4 5.1S1.6 4.6 0.4 2.8Z" fill="none" stroke="#eee" stroke-width="1.15"/><circle cx="4" cy="2.8" r="1.4" fill="#eee"/></svg>
<div class="t" style="left:9.8px;top:482.7px;height:10px;line-height:10px;font-size:10.5px;color:#858585;font-family:'Liberation Serif',serif;letter-spacing:-.2px;transform-origin:0 50%;transform:scale(.95,.9)">TI</div>
<svg style="left:26.8px;top:484.7px;" width="5.6" height="6.5" viewBox="0 0 6 7"><rect x="0.2" y="2.8" width="5.6" height="4" rx=".7" fill="#1fc4d6"/><path d="M1.5 3V2a1.5 1.5 0 0 1 3 0v1" fill="none" stroke="#1fc4d6" stroke-width="1"/></svg>
<svg style="left:41.1px;top:485.6px;" width="7.2" height="5" viewBox="0 0 8 5.6"><path d="M0.4 2.8C1.6 1 2.7 0.5 4 0.5S6.4 1 7.6 2.8C6.4 4.6 5.3 5.1 4 5.1S1.6 4.6 0.4 2.8Z" fill="none" stroke="#eee" stroke-width="1.15"/><circle cx="4" cy="2.8" r="1.4" fill="#eee"/></svg>
<div class="t" style="left:9.8px;top:500.2px;height:10px;line-height:10px;font-size:10.5px;color:#858585;font-family:'Liberation Serif',serif;letter-spacing:-.2px;transform-origin:0 50%;transform:scale(.95,.9)">TI</div>
<svg style="left:26.8px;top:502.2px;" width="5.6" height="6.5" viewBox="0 0 6 7"><rect x="0.2" y="2.8" width="5.6" height="4" rx=".7" fill="#1fc4d6"/><path d="M1.5 3V2a1.5 1.5 0 0 1 3 0v1" fill="none" stroke="#1fc4d6" stroke-width="1"/></svg>
<svg style="left:41.1px;top:503.1px;" width="7.2" height="5" viewBox="0 0 8 5.6"><path d="M0.4 2.8C1.6 1 2.7 0.5 4 0.5S6.4 1 7.6 2.8C6.4 4.6 5.3 5.1 4 5.1S1.6 4.6 0.4 2.8Z" fill="none" stroke="#eee" stroke-width="1.15"/><circle cx="4" cy="2.8" r="1.4" fill="#eee"/></svg>
<svg style="left:10.7px;top:535.3px;" width="8" height="8" viewBox="0 0 8 8"><rect x="0.5" y="0.5" width="7" height="7" rx=".8" fill="none" stroke="#7c7c7c" stroke-width=".9"/><path d="M3.2 2.6L5.4 4 3.2 5.4Z" fill="#7c7c7c"/></svg>
<svg style="left:26.8px;top:536px;" width="5.6" height="6.5" viewBox="0 0 6 7"><rect x="0.2" y="2.8" width="5.6" height="4" rx=".7" fill="#1fc4d6"/><path d="M1.5 3V2a1.5 1.5 0 0 1 3 0v1" fill="none" stroke="#1fc4d6" stroke-width="1"/></svg>
<svg style="left:41.1px;top:536.9px;" width="7.2" height="5" viewBox="0 0 8 5.6"><path d="M0.4 2.8C1.6 1 2.7 0.5 4 0.5S6.4 1 7.6 2.8C6.4 4.6 5.3 5.1 4 5.1S1.6 4.6 0.4 2.8Z" fill="none" stroke="#eee" stroke-width="1.15"/><circle cx="4" cy="2.8" r="1.4" fill="#eee"/></svg>
<svg style="left:56.6px;top:536px;" width="8" height="6.6" viewBox="0 0 8 6.6"><path d="M0.4 2.3h1.5L4 0.6v6L1.9 4.9H0.4Z" fill="#eee"/><path d="M5.1 2.2a2 2 0 0 1 0 2.8M6.2 1.2a3.5 3.5 0 0 1 0 4.8" fill="none" stroke="#eee" stroke-width=".8"/></svg>
<div class="t" style="left:73.2px;top:534.3px;height:10px;line-height:10px;font-size:7px;color:#eee;font-weight:700;">S</div>
<svg style="left:10.7px;top:578.3px;" width="8" height="8" viewBox="0 0 8 8"><circle cx="4" cy="4" r="3.5" fill="none" stroke="#8a8a8a" stroke-width=".9"/><circle cx="3.7" cy="4.7" r="1.1" fill="none" stroke="#8a8a8a" stroke-width=".8"/><path d="M4.8 4.7V1.8l1.2.6" fill="none" stroke="#8a8a8a" stroke-width=".8"/></svg>
<svg style="left:26.8px;top:579px;" width="5.6" height="6.5" viewBox="0 0 6 7"><rect x="0.2" y="2.8" width="5.6" height="4" rx=".7" fill="#1fc4d6"/><path d="M1.5 3V2a1.5 1.5 0 0 1 3 0v1" fill="none" stroke="#1fc4d6" stroke-width="1"/></svg>
<svg style="left:56.6px;top:579px;" width="8" height="6.6" viewBox="0 0 8 6.6"><path d="M0.4 2.3h1.5L4 0.6v6L1.9 4.9H0.4Z" fill="#eee"/><path d="M5.1 2.2a2 2 0 0 1 0 2.8M6.2 1.2a3.5 3.5 0 0 1 0 4.8" fill="none" stroke="#eee" stroke-width=".8"/></svg>
<div class="t" style="left:73.2px;top:577.3px;height:10px;line-height:10px;font-size:7px;color:#eee;font-weight:700;">S</div>
<svg style="left:10.7px;top:613.8px;" width="8" height="8" viewBox="0 0 8 8"><circle cx="4" cy="4" r="3.5" fill="none" stroke="#8a8a8a" stroke-width=".9"/><circle cx="3.7" cy="4.7" r="1.1" fill="none" stroke="#8a8a8a" stroke-width=".8"/><path d="M4.8 4.7V1.8l1.2.6" fill="none" stroke="#8a8a8a" stroke-width=".8"/></svg>
<svg style="left:26.8px;top:614.5px;" width="5.6" height="6.5" viewBox="0 0 6 7"><rect x="0.6" y="3" width="4.8" height="3.6" rx=".7" fill="none" stroke="#eee" stroke-width="1"/><path d="M1.6 3V2a1.4 1.4 0 0 1 2.8 0v1" fill="none" stroke="#eee" stroke-width="1"/><path d="M3 4.3v1" stroke="#eee" stroke-width=".8"/></svg>
<svg style="left:56.6px;top:614.5px;" width="8" height="6.6" viewBox="0 0 8 6.6"><path d="M0.4 2.3h1.5L4 0.6v6L1.9 4.9H0.4Z" fill="#eee"/><path d="M5.1 2.2a2 2 0 0 1 0 2.8M6.2 1.2a3.5 3.5 0 0 1 0 4.8" fill="none" stroke="#eee" stroke-width=".8"/></svg>
<div class="t" style="left:73.2px;top:612.8px;height:10px;line-height:10px;font-size:7px;color:#eee;font-weight:700;">S</div>
<div style="left:86.7px;top:528px;width:24px;height:24px;background:#393939;border-radius:2.5px;border:.5px dashed #444"></div>
<div class="t" style="left:86.7px;top:535px;width:24px;text-align:center;height:10px;line-height:10px;font-size:7.3px;color:#f2f2f2;font-weight:700;">封面</div>
<div style="left:115.8px;top:391px;width:955.2px;height:16px;background:#2f2f2f;overflow:hidden"></div>
<div style="left:533.7px;top:392.5px;width:67.8px;height:13.2px;background:#a9513d;border:1.2px solid #f4f4f4;border-left-width:1.6px;border-radius:2.5px;overflow:hidden"><svg style="left:5px;top:2.3px" width="7.5" height="7" viewBox="0 0 7.5 7"><rect x="0.5" y="0.5" width="6.5" height="4.8" rx=".6" fill="none" stroke="#fff" stroke-width=".9"/><path d="M2 2.2h1.4M2 3.6h3.4M2.6 6.6h2.4" stroke="#fff" stroke-width=".8"/></svg><div class="t" style="left:14.6px;top:1.3px;height:9px;line-height:9px;font-size:6.25px;color:#ecd8d0;">老师改试卷时总用红笔</div></div>
<div style="left:115.8px;top:410px;width:955.2px;height:13.3px;background:#333;overflow:hidden"><div class="clip" style="left:34.2px;top:0px;width:16.3px;height:13.3px;background:#e9a23a;"><svg style="left:3.6px;top:2.5px" width="9" height="6" viewBox="0 0 9 6"><path d="M0.5 4.5C1 2 3 0.6 5 1c2 .3 3.3 1.8 3.5 3.5-1-1-2-1.3-3-1-1 .3-1.5 1-2.5 1.3-1 .2-2 0-2.5-.3Z" fill="#d4201c"/></svg><div style="left:1.5px;top:10.8px;width:10.5px;height:.9px;background:#fff"></div></div><div class="clip" style="left:52px;top:0px;width:12.5px;height:13.3px;background:#e9a23a;"><svg style="left:1.8px;top:2.5px" width="9" height="6" viewBox="0 0 9 6"><path d="M0.5 4.5C1 2 3 0.6 5 1c2 .3 3.3 1.8 3.5 3.5-1-1-2-1.3-3-1-1 .3-1.5 1-2.5 1.3-1 .2-2 0-2.5-.3Z" fill="#d4201c"/></svg><div style="left:1.5px;top:10.8px;width:8.5px;height:.9px;background:#fff"></div></div><div class="hatch" style="left:0;top:0;width:955.2px;height:13.3px"></div></div>
<div style="left:115.8px;top:427.7px;width:955.2px;height:13.3px;background:#333;overflow:hidden"><div class="clip" style="left:34.2px;top:0px;width:16.3px;height:13.3px;background:#e9a23a;"><svg style="left:3.6px;top:2.5px" width="9" height="6" viewBox="0 0 9 6"><path d="M0.5 4.5C1 2 3 0.6 5 1c2 .3 3.3 1.8 3.5 3.5-1-1-2-1.3-3-1-1 .3-1.5 1-2.5 1.3-1 .2-2 0-2.5-.3Z" fill="#d4201c"/></svg><div style="left:1.5px;top:10.8px;width:10.5px;height:.9px;background:#fff"></div></div><div class="clip" style="left:52px;top:0px;width:12.5px;height:13.3px;background:#e9a23a;"><svg style="left:1.8px;top:2.5px" width="9" height="6" viewBox="0 0 9 6"><path d="M0.5 4.5C1 2 3 0.6 5 1c2 .3 3.3 1.8 3.5 3.5-1-1-2-1.3-3-1-1 .3-1.5 1-2.5 1.3-1 .2-2 0-2.5-.3Z" fill="#d4201c"/></svg><div style="left:1.5px;top:10.8px;width:8.5px;height:.9px;background:#fff"></div></div><div class="hatch" style="left:0;top:0;width:955.2px;height:13.3px"></div></div>
<div style="left:115.8px;top:445.5px;width:955.2px;height:13.3px;background:#333;overflow:hidden"><div class="clip" style="left:1px;top:0px;width:49.9px;height:13.3px;background:#b3604c;"><div class="t" style="left:4px;top:2.2px;height:9px;line-height:9px;font-size:6.2px;font-weight:700;color:#fff;letter-spacing:-.4px">A≡</div><div class="t" style="left:15.5px;top:2.2px;height:9px;line-height:9px;font-size:6.3px;color:#f0d8d0;">1分钟教你辨别</div></div><div class="clip" style="left:52px;top:0px;width:12.5px;height:13.3px;background:#b3604c;"><div class="t" style="left:3px;top:2.2px;height:9px;line-height:9px;font-size:6.2px;font-weight:700;color:#fff;letter-spacing:-.4px">A≡</div></div><div class="hatch" style="left:0;top:0;width:955.2px;height:13.3px"></div></div>
<div style="left:115.8px;top:463.3px;width:955.2px;height:13.3px;background:#333;overflow:hidden"><div class="clip" style="left:58.4px;top:0px;width:6px;height:13.3px;background:#b3604c;"></div><div class="hatch" style="left:0;top:0;width:955.2px;height:13.3px"></div></div>
<div style="left:115.8px;top:481px;width:955.2px;height:13.3px;background:#333;overflow:hidden"><div class="clip" style="left:1px;top:0px;width:49.9px;height:13.3px;background:#b3604c;"><div class="t" style="left:4px;top:2.2px;height:9px;line-height:9px;font-size:6.2px;font-weight:700;color:#fff;letter-spacing:-.4px">A≡</div><div class="t" style="left:15.5px;top:2.2px;height:9px;line-height:9px;font-size:6.5px;color:#f0d8d0;">-One minute</div></div><div class="clip" style="left:53.7px;top:0px;width:10.8px;height:13.3px;background:#b3604c;"></div><div class="hatch" style="left:0;top:0;width:955.2px;height:13.3px"></div></div>
<div style="left:115.8px;top:499px;width:955.2px;height:13.3px;background:#333;overflow:hidden"><div class="clip" style="left:34.2px;top:0px;width:16.7px;height:13.3px;background:#b3604c;"><div class="t" style="left:3px;top:2.2px;height:9px;line-height:9px;font-size:6.2px;font-weight:700;color:#fff;letter-spacing:-.4px">A≡</div><div class="t" style="left:13.5px;top:2.2px;height:9px;line-height:9px;font-size:6.3px;color:#f0d8d0;">I</div></div><div class="hatch" style="left:0;top:0;width:955.2px;height:13.3px"></div></div>
<div style="left:115.8px;top:516.7px;width:955.2px;height:45px;background:#333;overflow:hidden"><div class="clip" style="left:0.2px;top:0px;width:50.8px;height:45px;background:#175a5e;"><svg style="left:0px;top:11.3px" width="31.6" height="24" viewBox="0 0 31.6 24"><rect width="31.6" height="24" fill="#10140f"/><path d="M0 24V8C1.5 3 7 0 15 0s14.5 3 16.6 8.5v15.5Z" fill="#4c933d"/><path d="M2.5 8.5C6 3 24 3 29 7.5c-6-2-20-2-26.5 1Z" fill="#3a7a2e"/><path d="M6 6.4c3-1 7-1 9.5.3l1 .5c2.5-1.2 6.5-1.4 10-.4l-.7 5c-1.7 2-6 2.2-8 .2l-1.3-2.3-1.4 2.3c-2.2 2-6.6 1.7-8.4-.6Z" fill="#0b0d0b"/><path d="M8.5 8l4.5 3M19 8l4.5 3" stroke="#2f5a2a" stroke-width="1"/><path d="M6.8 13.8c4 2.6 13.5 3.2 21.4-.4 1 2-.2 4.3-3 5.4-5 1.9-12 1.7-16.2-.6-2.3-1.3-3-2.9-2.2-4.4Z" fill="#b65a3e"/><path d="M8 15.6c5.5 2.5 13 2.5 19.5-.4" stroke="#7a3523" stroke-width=".6" fill="none"/><path d="M0 19.6c2.5-.5 4.3.8 5 4.4H0Z" fill="#1d50e6"/><path d="M19 24c1-2.5 3.8-3.8 7-3.6 2.4.2 4.2 1.3 5.6 3.6Z" fill="#1d50e6"/></svg><svg style="left:31.6px;top:11.3px" width="31.6" height="24" viewBox="0 0 31.6 24"><rect width="31.6" height="24" fill="#10140f"/><path d="M0 24V8C1.5 3 7 0 15 0s14.5 3 16.6 8.5v15.5Z" fill="#4c933d"/><path d="M2.5 8.5C6 3 24 3 29 7.5c-6-2-20-2-26.5 1Z" fill="#3a7a2e"/><path d="M6 6.4c3-1 7-1 9.5.3l1 .5c2.5-1.2 6.5-1.4 10-.4l-.7 5c-1.7 2-6 2.2-8 .2l-1.3-2.3-1.4 2.3c-2.2 2-6.6 1.7-8.4-.6Z" fill="#0b0d0b"/><path d="M8.5 8l4.5 3M19 8l4.5 3" stroke="#2f5a2a" stroke-width="1"/><path d="M6.8 13.8c4 2.6 13.5 3.2 21.4-.4 1 2-.2 4.3-3 5.4-5 1.9-12 1.7-16.2-.6-2.3-1.3-3-2.9-2.2-4.4Z" fill="#b65a3e"/><path d="M8 15.6c5.5 2.5 13 2.5 19.5-.4" stroke="#7a3523" stroke-width=".6" fill="none"/><path d="M0 19.6c2.5-.5 4.3.8 5 4.4H0Z" fill="#1d50e6"/><path d="M19 24c1-2.5 3.8-3.8 7-3.6 2.4.2 4.2 1.3 5.6 3.6Z" fill="#1d50e6"/></svg><div class="t" style="left:3.8px;top:1.6px;height:9px;line-height:9px;font-size:6.6px;color:#e6f2f4;">640.gif</div><div class="t" style="left:30px;top:1.6px;height:9px;line-height:9px;font-size:6.6px;color:#e6f2f4;">00:00:0</div></div><div class="clip" style="left:52px;top:0px;width:12.5px;height:45px;background:#175a5e;"><svg style="left:0;top:11.3px" width="12.5" height="24" viewBox="0 0 12.5 24"><rect width="12.5" height="24" fill="#f4f4f4"/><path d="M12.5 4.5C9.5 4 7.5 6 7.8 8.8c.2 1.7 0 3.4-.6 5.5-.5 2 .2 4.3 1.2 5.4l-.6 3h1.6l.6-2.4c.8.3 1.7.3 2.5.1Z" fill="#4f9a40"/><circle cx="10.9" cy="8" r="1.4" fill="#e8f0e4"/><circle cx="11.3" cy="8" r=".6" fill="#111"/></svg><div class="t" style="left:2.2px;top:1.6px;height:9px;line-height:9px;font-size:6.6px;color:#e6f2f4;">01c</div></div><div class="hatch" style="left:0;top:0;width:955.2px;height:45px"></div></div>
<div style="left:115.8px;top:567px;width:955.2px;height:30.5px;background:#333;overflow:hidden"><div class="clip" style="left:0.2px;top:0px;width:49.4px;height:30.5px;background:#14566e;"><svg style="left:0;top:11.5px" width="49.4" height="19" viewBox="0 0 49.4 19"><path d="M0 19 L0 8.87 L0.7 8.87 L1.18 11.58 L2 11.58 L2.32 12.82 L3.1 12.82 L3.41 8.05 L4.16 8.05 L4.51 8.79 L5.1 8.79 L5.41 11.91 L6.12 11.91 L6.61 11.33 L7.22 11.33 L7.82 8.4 L8.45 8.4 L8.82 11.8 L9.48 11.8 L10.03 9.68 L10.53 9.68 L10.9 9.28 L11.56 9.28 L11.88 7.56 L12.41 7.56 L12.81 2.44 L13.35 2.44 L13.67 9.58 L14.35 9.58 L14.71 9.76 L15.25 9.76 L15.68 10.4 L16.5 10.4 L16.89 9.45 L17.73 9.45 L18.23 12.74 L18.83 12.74 L19.36 8.88 L20.09 8.88 L20.47 10.83 L21.35 10.83 L21.8 12.96 L22.36 12.96 L22.93 13.37 L23.73 13.37 L24.31 8.59 L25.05 8.59 L25.48 12.96 L26.07 12.96 L26.58 10.92 L27.2 10.92 L27.55 12.05 L28.28 12.05 L28.83 10.96 L29.41 10.96 L29.72 8.51 L30.37 8.51 L30.84 12.12 L31.73 12.12 L32.23 14 L32.74 14 L33.05 8.37 L33.56 8.37 L34.05 8.35 L34.95 8.35 L35.27 8.1 L36.06 8.1 L36.57 6.76 L37.35 6.76 L37.92 8.66 L38.76 8.66 L39.24 8.8 L39.98 8.8 L40.3 6.46 L41.09 6.46 L41.51 8.04 L42.35 8.04 L42.67 10.15 L43.36 10.15 L43.73 8.36 L44.6 8.36 L44.98 11.13 L45.56 11.13 L45.91 8.13 L46.77 8.13 L47.16 9.5 L47.99 9.5 L48.56 8.79 L49.19 8.79 L49.4 19Z" fill="#2596c2"/></svg><svg style="left:3.3px;top:2.3px" width="8" height="6.5" viewBox="0 0 8 6.5"><rect x="0.5" y="0.5" width="7" height="5.5" rx="1" fill="none" stroke="#e8f4f8" stroke-width=".9"/><path d="M2 4.4L3 2l1 2.4M5 2.6v1.8M5 3.4c.5-.8 1.4-.4 1.2 1" fill="none" stroke="#e8f4f8" stroke-width=".6"/></svg><div class="t" style="left:13.5px;top:1.3px;height:9px;line-height:9px;font-size:6.4px;color:#e6f2f6;">一分钟教你辨别</div></div><div class="clip" style="left:52px;top:0px;width:12.3px;height:30.5px;background:#14566e;"><svg style="left:0;top:11.5px" width="12.3" height="19" viewBox="0 0 12.3 19"><path d="M0 19 L0 13.14 L0.5 13.14 L0.92 9.87 L1.66 9.87 L2.12 11.2 L2.69 11.2 L3.26 5.73 L3.9 5.73 L4.32 6.26 L5.02 6.26 L5.35 0.95 L5.9 0.95 L6.3 9.63 L6.82 9.63 L7.17 8.73 L7.91 8.73 L8.35 10.57 L9.24 10.57 L9.83 8.9 L10.61 8.9 L11.11 10.92 L11.81 10.92 L12.3 19Z" fill="#2596c2"/></svg><svg style="left:3.3px;top:2.3px" width="8" height="6.5" viewBox="0 0 8 6.5"><rect x="0.5" y="0.5" width="7" height="5.5" rx="1" fill="none" stroke="#e8f4f8" stroke-width=".9"/><path d="M2 4.4L3 2l1 2.4M5 2.6v1.8M5 3.4c.5-.8 1.4-.4 1.2 1" fill="none" stroke="#e8f4f8" stroke-width=".6"/></svg></div><div class="hatch" style="left:0;top:0;width:955.2px;height:30.5px"></div></div>
<div class="clip" style="left:181.5px;top:603px;width:25.2px;height:30.7px;background:#063b52;border-radius:1.5px"><svg style="left:0;top:10.5px" width="25.2" height="20.3" viewBox="0 0 25.2 20.3"><path d="M0 20.3 L0 7.73 L0.59 7.73 L1.12 6.79 L1.72 6.79 L2.02 1.02 L2.61 1.02 L2.98 7.73 L3.83 7.73 L4.32 11.46 L4.86 11.46 L5.45 12.05 L6 12.05 L6.58 10.7 L7.27 10.7 L7.63 9.64 L8.44 9.64 L8.8 7 L9.61 7 L10.08 9.29 L10.91 9.29 L11.27 4.52 L11.92 4.52 L12.35 4.62 L12.86 4.62 L13.19 3.99 L13.89 3.99 L14.35 7.83 L15.08 7.83 L15.56 9.42 L16.43 9.42 L16.84 4.42 L17.66 4.42 L18.2 7.29 L19.06 7.29 L19.64 6.47 L20.38 6.47 L20.95 9.1 L21.8 9.1 L22.14 9.56 L22.84 9.56 L23.39 18.07 L23.91 18.07 L24.29 18.07 L24.9 18.07 L25.2 20.3Z" fill="#1688b2"/></svg><div style="left:0;top:23.6px;width:25.2px;height:.6px;background:rgba(120,200,230,.22)"></div><div style="left:1.5px;top:1.3px;width:30px;height:8.6px;background:#164c63;border-radius:1.5px;overflow:hidden"><svg style="left:1.3px;top:1px" width="8" height="6.5" viewBox="0 0 8 6.5"><rect x="0.5" y="0.5" width="7" height="5.5" rx="1" fill="none" stroke="#e8f4f8" stroke-width=".9"/><path d="M2 4.4L3 2l1 2.4M5 2.6v1.8M5 3.4c.5-.8 1.4-.4 1.2 1" fill="none" stroke="#e8f4f8" stroke-width=".6"/></svg><div class="t" style="left:10.5px;top:.6px;height:8.6px;line-height:8.6px;font-size:6.3px;color:#dcebf0">外婆</div></div></div>
<div class="clip" style="left:209.5px;top:603px;width:324px;height:30.7px;background:#063b52;border-radius:1.5px"><svg style="left:0;top:10.5px" width="324" height="20.3" viewBox="0 0 324 20.3"><path d="M0 20.3 L0 12.49 L0.57 12.49 L0.91 10.72 L1.5 10.72 L2.09 10.54 L2.86 10.54 L3.44 11.58 L4.18 11.58 L4.57 9.7 L5.45 9.7 L5.98 8.41 L6.72 8.41 L7.1 7.45 L7.98 7.45 L8.48 6.81 L9.05 6.81 L9.37 10.12 L10.07 10.12 L10.52 7.81 L11.15 7.81 L11.56 8.99 L12.28 8.99 L12.71 1.02 L13.35 1.02 L13.78 5.81 L14.48 5.81 L14.9 13.01 L15.62 13.01 L16.03 14.71 L16.54 14.71 L17 13.21 L17.78 13.21 L18.1 8.22 L18.78 8.22 L19.33 9.41 L20.23 9.41 L20.75 8.76 L21.39 8.76 L21.93 7.64 L22.44 7.64 L22.89 13.04 L23.66 13.04 L24.09 10.5 L24.74 10.5 L25.07 10.83 L25.64 10.83 L26.03 14.71 L26.66 14.71 L27.18 1.22 L28.02 1.22 L28.33 10.31 L29.13 10.31 L29.65 11.33 L30.26 11.33 L30.57 10.96 L31.33 10.96 L31.65 3.26 L32.16 3.26 L32.69 10.43 L33.53 10.43 L33.9 11.95 L34.75 11.95 L35.29 11.29 L35.86 11.29 L36.4 8.8 L37.24 8.8 L37.7 14.88 L38.53 14.88 L38.98 8.33 L39.56 8.33 L39.98 6.6 L40.74 6.6 L41.1 11.15 L41.7 11.15 L42.15 8.79 L43 8.79 L43.48 1.02 L44.25 1.02 L44.79 3.83 L45.5 3.83 L46.08 6.88 L46.87 6.88 L47.27 4.25 L48.13 4.25 L48.67 7.33 L49.27 7.33 L49.59 18.07 L50.46 18.07 L50.85 18.07 L51.36 18.07 L51.75 18.07 L52.29 18.07 L52.73 18.07 L53.36 18.07 L53.71 5.66 L54.43 5.66 L54.99 1.02 L55.7 1.02 L56.06 9.34 L56.62 9.34 L56.93 1.02 L57.75 1.02 L58.2 9.17 L59.07 9.17 L59.55 1.02 L60.37 1.02 L60.87 6.74 L61.43 6.74 L61.87 9.27 L62.62 9.27 L63.11 8.79 L63.73 8.79 L64.1 7.71 L64.76 7.71 L65.23 11.2 L65.95 11.2 L66.5 9.63 L67.09 9.63 L67.55 9.75 L68.14 9.75 L68.61 9.68 L69.5 9.68 L69.98 5.06 L70.5 5.06 L70.98 3.31 L71.76 3.31 L72.13 11.31 L72.74 11.31 L73.04 14.02 L73.92 14.02 L74.37 12.23 L75.06 12.23 L75.41 10.87 L76.09 10.87 L76.52 9.65 L77.1 9.65 L77.65 6.34 L78.37 6.34 L78.95 10.87 L79.74 10.87 L80.11 3.99 L80.83 3.99 L81.18 4.87 L82.04 4.87 L82.55 8.4 L83.41 8.4 L83.85 9.27 L84.69 9.27 L85.11 7.8 L85.68 7.8 L86.06 9.7 L86.69 9.7 L87.24 5.4 L87.84 5.4 L88.37 5.79 L89.13 5.79 L89.65 9.06 L90.24 9.06 L90.6 9.53 L91.21 9.53 L91.78 8.9 L92.6 8.9 L93.06 1.4 L93.69 1.4 L94.24 8.35 L94.79 8.35 L95.16 18.07 L95.8 18.07 L96.22 18.07 L96.78 18.07 L97.28 18.07 L97.88 18.07 L98.44 18.07 L99.14 18.07 L99.56 9.32 L100.16 9.32 L100.68 7.4 L101.21 7.4 L101.6 12.38 L102.18 12.38 L102.53 8.26 L103.12 8.26 L103.44 4.34 L104.24 4.34 L104.54 8.25 L105.24 8.25 L105.68 10.4 L106.27 10.4 L106.67 7.32 L107.26 7.32 L107.73 6.66 L108.5 6.66 L109.01 6.14 L109.83 6.14 L110.24 11.15 L110.78 11.15 L111.12 9.62 L111.71 9.62 L112.24 11.57 L113.08 11.57 L113.64 11.67 L114.19 11.67 L114.57 7.77 L115.1 7.77 L115.62 6.04 L116.42 6.04 L116.95 6.48 L117.76 6.48 L118.13 8.77 L118.96 8.77 L119.41 1.02 L120.1 1.02 L120.55 4.27 L121.27 4.27 L121.77 4.03 L122.51 4.03 L122.93 5.55 L123.79 5.55 L124.31 5.42 L124.95 5.42 L125.26 5.2 L126.06 5.2 L126.37 7.54 L127.22 7.54 L127.64 13.41 L128.23 13.41 L128.59 4.77 L129.38 4.77 L129.98 11.94 L130.79 11.94 L131.13 8.41 L131.75 8.41 L132.31 7.4 L133.16 7.4 L133.75 9.12 L134.47 9.12 L134.99 8.72 L135.56 8.72 L136 7.34 L136.59 7.34 L136.99 9.07 L137.58 9.07 L137.97 6.66 L138.84 6.66 L139.34 9.39 L140.14 9.39 L140.6 10.96 L141.41 10.96 L141.85 12.46 L142.65 12.46 L142.98 10.44 L143.57 10.44 L143.9 11.54 L144.57 11.54 L145.16 9.01 L145.89 9.01 L146.44 11.38 L147.19 11.38 L147.61 11.99 L148.42 11.99 L148.87 8.75 L149.63 8.75 L150.22 9.97 L150.98 9.97 L151.51 18.07 L152.29 18.07 L152.86 18.07 L153.75 18.07 L154.12 18.07 L154.81 18.07 L155.12 8.52 L155.69 8.52 L156.14 10.34 L156.76 10.34 L157.19 9.55 L158.05 9.55 L158.64 4.86 L159.3 4.86 L159.85 3.54 L160.52 3.54 L161.07 12.27 L161.7 12.27 L162.13 9.24 L162.96 9.24 L163.52 9.39 L164.22 9.39 L164.79 7.46 L165.59 7.46 L165.91 1.02 L166.67 1.02 L167.12 8.6 L167.96 8.6 L168.37 6.24 L169.04 6.24 L169.49 10.97 L170.19 10.97 L170.71 6.29 L171.47 6.29 L171.97 4.03 L172.52 4.03 L173.04 1.02 L173.89 1.02 L174.35 8.4 L175.16 8.4 L175.51 4.21 L176.16 4.21 L176.56 9.04 L177.16 9.04 L177.67 5.81 L178.51 5.81 L178.86 5.08 L179.36 5.08 L179.69 1.02 L180.35 1.02 L180.67 4.67 L181.24 4.67 L181.81 8.16 L182.68 8.16 L183.25 4.87 L183.75 4.87 L184.26 13.04 L185.11 13.04 L185.68 10.6 L186.3 10.6 L186.86 1.02 L187.44 1.02 L187.87 9.55 L188.55 9.55 L188.86 11.76 L189.49 11.76 L190.08 9.96 L190.98 9.96 L191.41 7.9 L192.01 7.9 L192.53 5.81 L193.36 5.81 L193.7 11.23 L194.2 11.23 L194.52 9.89 L195.34 9.89 L195.85 9.54 L196.53 9.54 L197.12 7.86 L198 7.86 L198.53 9.03 L199.41 9.03 L199.78 12.66 L200.33 12.66 L200.8 8.8 L201.36 8.8 L201.83 6.4 L202.36 6.4 L202.83 9.55 L203.61 9.55 L203.91 10.76 L204.61 10.76 L205.05 9.12 L205.65 9.12 L206.01 9.17 L206.66 9.17 L207 8.83 L207.76 8.83 L208.06 6.14 L208.69 6.14 L209.24 1.02 L210.06 1.02 L210.36 6.34 L211.01 6.34 L211.59 8.64 L212.32 8.64 L212.68 9.02 L213.19 9.02 L213.58 18.07 L214.14 18.07 L214.65 18.07 L215.46 18.07 L215.76 18.07 L216.58 18.07 L217.14 5.45 L217.92 5.45 L218.25 6.26 L218.96 6.26 L219.4 10.3 L220.27 10.3 L220.61 10.05 L221.28 10.05 L221.6 9.21 L222.43 9.21 L222.89 9.57 L223.66 9.57 L224.16 4.64 L224.66 4.64 L225.1 5.06 L225.63 5.06 L226.1 7.83 L226.95 7.83 L227.26 5.9 L227.82 5.9 L228.28 5.79 L229.11 5.79 L229.52 7.41 L230.35 7.41 L230.78 8.87 L231.63 8.87 L232.17 11.48 L232.81 11.48 L233.19 7.04 L233.95 7.04 L234.52 8.91 L235.25 8.91 L235.68 4.55 L236.44 4.55 L236.78 7.44 L237.65 7.44 L238.21 5.59 L238.93 5.59 L239.27 5.66 L239.81 5.66 L240.22 10.92 L240.84 10.92 L241.14 7.82 L241.8 7.82 L242.22 14.84 L242.89 14.84 L243.46 9.59 L244.22 9.59 L244.66 9.58 L245.24 9.58 L245.63 10.66 L246.24 10.66 L246.63 7.52 L247.48 7.52 L247.83 7.4 L248.54 7.4 L249.03 4.35 L249.54 4.35 L249.94 11.39 L250.51 11.39 L251.03 9.1 L251.88 9.1 L252.3 9.22 L252.98 9.22 L253.54 1.02 L254.08 1.02 L254.38 11.46 L255.08 11.46 L255.53 8.1 L256.38 8.1 L256.81 10.17 L257.37 10.17 L257.86 3.29 L258.5 3.29 L258.91 18.07 L259.71 18.07 L260.01 18.07 L260.62 18.07 L261.21 18.07 L261.89 18.07 L262.2 18.07 L262.94 18.07 L263.44 9.72 L264.22 9.72 L264.62 14.81 L265.18 14.81 L265.59 9.7 L266.12 9.7 L266.54 7.52 L267.26 7.52 L267.77 1.02 L268.46 1.02 L269.06 1.87 L269.87 1.87 L270.17 7.75 L270.94 7.75 L271.26 1.02 L271.89 1.02 L272.26 1.02 L273.13 1.02 L273.46 8.86 L273.97 8.86 L274.32 7.73 L275.21 7.73 L275.74 11.61 L276.56 11.61 L277.1 6.86 L277.83 6.86 L278.38 5.35 L279.09 5.35 L279.42 5.45 L280.22 5.45 L280.79 7.3 L281.51 7.3 L281.94 6.73 L282.73 6.73 L283.11 6.3 L283.9 6.3 L284.37 6.88 L284.87 6.88 L285.29 7.48 L285.79 7.48 L286.36 7.25 L286.96 7.25 L287.28 9.68 L288.05 9.68 L288.48 9.28 L289.21 9.28 L289.69 9.29 L290.58 9.29 L291.06 12.57 L291.96 12.57 L292.55 14.74 L293.12 14.74 L293.55 9.05 L294.27 9.05 L294.65 9.94 L295.51 9.94 L295.9 7.5 L296.68 7.5 L297.05 8.65 L297.61 8.65 L297.96 15.06 L298.72 15.06 L299.29 11.02 L300.17 11.02 L300.58 10.95 L301.42 10.95 L301.89 6.59 L302.58 6.59 L303 7.87 L303.51 7.87 L304.01 9.83 L304.88 9.83 L305.38 8.93 L306.15 8.93 L306.66 8.61 L307.24 8.61 L307.55 9.93 L308.1 9.93 L308.66 13.83 L309.56 13.83 L310 4.31 L310.84 4.31 L311.17 15.11 L311.92 15.11 L312.46 10.22 L313.29 10.22 L313.71 10.27 L314.24 10.27 L314.64 4.84 L315.2 4.84 L315.7 15.03 L316.51 15.03 L316.87 9.46 L317.65 9.46 L318.15 7.92 L318.95 7.92 L319.37 8.49 L319.88 8.49 L320.23 18.07 L321 18.07 L321.32 18.07 L321.86 18.07 L322.43 18.07 L323.28 18.07 L323.88 18.07 L324.69 18.07 L324 20.3Z" fill="#1688b2"/></svg><div style="left:0;top:23.6px;width:324px;height:.6px;background:rgba(120,200,230,.22)"></div><div style="left:1.5px;top:1.3px;width:80.7px;height:8.6px;background:#164c63;border-radius:1.5px;overflow:hidden"><svg style="left:1.3px;top:1px" width="8" height="6.5" viewBox="0 0 8 6.5"><rect x="0.5" y="0.5" width="7" height="5.5" rx="1" fill="none" stroke="#e8f4f8" stroke-width=".9"/><path d="M2 4.4L3 2l1 2.4M5 2.6v1.8M5 3.4c.5-.8 1.4-.4 1.2 1" fill="none" stroke="#e8f4f8" stroke-width=".6"/></svg><div class="t" style="left:10.5px;top:.6px;height:8.6px;line-height:8.6px;font-size:6.3px;color:#dcebf0">外婆总在我离家前缝补...</div></div><div style="left:87.2px;top:1.3px;width:39.5px;height:8.6px;background:#164c63;border-radius:1.5px;overflow:hidden"><svg style="left:1.5px;top:.8px" width="7" height="7" viewBox="0 0 7 7"><circle cx="3.5" cy="3.5" r="2.9" fill="none" stroke="#e8f4f8" stroke-width=".9"/><path d="M3.5 3.5L5 2" stroke="#e8f4f8" stroke-width=".9"/></svg><div class="t" style="left:10px;top:.6px;height:8.6px;line-height:8.6px;font-size:6.3px;color:#dcebf0">变速 1.2X</div></div><div style="left:130.5px;top:1.3px;width:56px;height:8.6px;background:#164c63;border-radius:1.5px;overflow:hidden"><div class="t" style="left:2px;top:.6px;height:8.6px;line-height:8.6px;font-size:6.3px;color:#dcebf0">文本朗读 甜美解说</div></div></div>
<div class="clip" style="left:536.7px;top:603px;width:29.4px;height:30.7px;background:#063b52;border-radius:1.5px"><svg style="left:0;top:10.5px" width="29.4" height="20.3" viewBox="0 0 29.4 20.3"><path d="M0 20.3 L0 1.02 L0.67 1.02 L1.13 10.11 L1.72 10.11 L2.15 12.28 L2.82 12.28 L3.28 3.38 L4.01 3.38 L4.51 7.31 L5.31 7.31 L5.72 8.19 L6.26 8.19 L6.7 7.41 L7.46 7.41 L7.81 10.04 L8.39 10.04 L8.72 12.44 L9.45 12.44 L10 11.32 L10.62 11.32 L11.15 5.38 L11.94 5.38 L12.49 10.72 L13.22 10.72 L13.81 3.67 L14.32 3.67 L14.86 8.24 L15.74 8.24 L16.2 6.54 L17.09 6.54 L17.5 10.83 L18.08 10.83 L18.66 1.6 L19.23 1.6 L19.69 7.67 L20.55 7.67 L20.99 5.35 L21.84 5.35 L22.35 6.73 L23.11 6.73 L23.48 8.96 L24.2 8.96 L24.67 8.89 L25.3 8.89 L25.77 7.7 L26.3 7.7 L26.77 7.76 L27.45 7.76 L27.89 8.91 L28.7 8.91 L29.05 7.92 L29.62 7.92 L29.4 20.3Z" fill="#1688b2"/></svg><div style="left:0;top:23.6px;width:29.4px;height:.6px;background:rgba(120,200,230,.22)"></div><div style="left:1.5px;top:1.3px;width:30px;height:8.6px;background:#164c63;border-radius:1.5px;overflow:hidden"><svg style="left:1.3px;top:1px" width="8" height="6.5" viewBox="0 0 8 6.5"><rect x="0.5" y="0.5" width="7" height="5.5" rx="1" fill="none" stroke="#e8f4f8" stroke-width=".9"/><path d="M2 4.4L3 2l1 2.4M5 2.6v1.8M5 3.4c.5-.8 1.4-.4 1.2 1" fill="none" stroke="#e8f4f8" stroke-width=".6"/></svg><div class="t" style="left:10.5px;top:.6px;height:8.6px;line-height:8.6px;font-size:6.3px;color:#dcebf0">老师很</div></div></div>
<div class="clip" style="left:569.3px;top:603px;width:314px;height:30.7px;background:#063b52;border-radius:1.5px"><svg style="left:0;top:10.5px" width="314" height="20.3" viewBox="0 0 314 20.3"><path d="M0 20.3 L0 9.05 L0.58 9.05 L1.08 13.25 L1.86 13.25 L2.38 8.53 L3.27 8.53 L3.61 6.21 L4.29 6.21 L4.68 8.51 L5.52 8.51 L5.86 8.18 L6.51 8.18 L7.08 7.36 L7.61 7.36 L7.93 4.96 L8.83 4.96 L9.39 6.44 L9.93 6.44 L10.37 10.62 L11.14 10.62 L11.73 10.86 L12.54 10.86 L13 10.44 L13.76 10.44 L14.25 9.88 L14.94 9.88 L15.49 11.94 L16.16 11.94 L16.73 6.59 L17.35 6.59 L17.79 11.4 L18.57 11.4 L19.11 9.14 L19.77 9.14 L20.14 11.11 L21 11.11 L21.54 11.54 L22.26 11.54 L22.77 9.6 L23.37 9.6 L23.79 9.6 L24.45 9.6 L24.75 10.78 L25.59 10.78 L26.05 8.49 L26.62 8.49 L26.93 8.67 L27.66 8.67 L28.17 6.87 L28.71 6.87 L29.06 3.27 L29.76 3.27 L30.27 10.36 L31.03 10.36 L31.46 7.09 L32.09 7.09 L32.45 11.53 L33.06 11.53 L33.62 10.47 L34.25 10.47 L34.77 8.77 L35.38 8.77 L35.7 9.25 L36.39 9.25 L36.79 13.47 L37.31 13.47 L37.66 7.12 L38.25 7.12 L38.65 6.13 L39.28 6.13 L39.65 6.19 L40.25 6.19 L40.74 4.3 L41.33 4.3 L41.87 18.07 L42.75 18.07 L43.21 18.07 L43.84 18.07 L44.16 18.07 L44.84 18.07 L45.42 18.07 L46.06 18.07 L46.5 8.22 L47.35 8.22 L47.74 5.36 L48.38 5.36 L48.74 11.43 L49.3 11.43 L49.63 4.53 L50.37 4.53 L50.89 7.99 L51.73 7.99 L52.08 8.22 L52.94 8.22 L53.26 8.97 L53.96 8.97 L54.55 4.57 L55.38 4.57 L55.79 1.02 L56.36 1.02 L56.84 11.17 L57.41 11.17 L57.84 7.67 L58.49 7.67 L58.81 7.41 L59.6 7.41 L60.1 6.99 L60.91 6.99 L61.21 7.98 L61.91 7.98 L62.37 7.11 L63.18 7.11 L63.75 9.26 L64.6 9.26 L65.13 13.5 L65.89 13.5 L66.32 6.73 L67.19 6.73 L67.68 11.22 L68.27 11.22 L68.83 6.83 L69.57 6.83 L70.08 7.84 L70.63 7.84 L71.15 1.02 L71.73 1.02 L72.19 9.12 L72.72 9.12 L73.27 11.14 L73.9 11.14 L74.23 4.08 L75.06 4.08 L75.55 1.1 L76.43 1.1 L77.03 6.74 L77.64 6.74 L78.16 6.77 L78.72 6.77 L79.07 5.15 L79.57 5.15 L80.1 8.81 L80.96 8.81 L81.53 1.02 L82.29 1.02 L82.77 8.08 L83.5 8.08 L83.98 8.87 L84.78 8.87 L85.29 6.61 L85.92 6.61 L86.52 6.47 L87.36 6.47 L87.88 7.02 L88.61 7.02 L89.04 9.08 L89.93 9.08 L90.34 8.28 L91.24 8.28 L91.73 18.07 L92.29 18.07 L92.78 18.07 L93.29 18.07 L93.81 18.07 L94.54 18.07 L95.03 5.13 L95.63 5.13 L96 4.35 L96.59 4.35 L97.03 7.75 L97.8 7.75 L98.16 4.57 L98.66 4.57 L99.16 9.02 L99.82 9.02 L100.17 6.17 L100.86 6.17 L101.23 7.04 L101.9 7.04 L102.42 12.41 L103.14 12.41 L103.48 10.11 L104.32 10.11 L104.75 10.54 L105.61 10.54 L105.94 12.35 L106.75 12.35 L107.08 8.95 L107.88 8.95 L108.39 6.63 L109.06 6.63 L109.47 11.62 L110.09 11.62 L110.43 11.37 L111.31 11.37 L111.73 12 L112.58 12 L113.16 3.87 L113.67 3.87 L114.05 13.22 L114.95 13.22 L115.44 9.51 L115.95 9.51 L116.44 9.66 L117.16 9.66 L117.57 14.81 L118.08 14.81 L118.57 12.55 L119.19 12.55 L119.6 9.82 L120.5 9.82 L120.83 12.27 L121.57 12.27 L122.16 13.09 L123.03 13.09 L123.46 9.21 L124.12 9.21 L124.5 5.62 L125.18 5.62 L125.71 6.88 L126.37 6.88 L126.77 6.89 L127.34 6.89 L127.69 8.28 L128.45 8.28 L128.96 11.3 L129.68 11.3 L130.08 2.71 L130.73 2.71 L131.23 9.81 L131.9 9.81 L132.24 11.51 L133.1 11.51 L133.42 7.97 L133.98 7.97 L134.47 8.08 L135.05 8.08 L135.43 7.91 L135.99 7.91 L136.3 8.97 L137.02 8.97 L137.54 10.94 L138.17 10.94 L138.47 11.69 L139.09 11.69 L139.45 9.4 L140.05 9.4 L140.62 9.43 L141.22 9.43 L141.61 8.62 L142.15 8.62 L142.67 7.35 L143.22 7.35 L143.56 18.07 L144.29 18.07 L144.87 18.07 L145.6 18.07 L145.97 4.01 L146.77 4.01 L147.12 8.66 L147.93 8.66 L148.36 7.53 L149.04 7.53 L149.57 11.52 L150.27 11.52 L150.6 9.56 L151.5 9.56 L152.09 9.22 L152.91 9.22 L153.23 12.23 L154.1 12.23 L154.59 9.74 L155.47 9.74 L155.91 9.96 L156.42 9.96 L156.87 9.35 L157.5 9.35 L157.82 12.17 L158.48 12.17 L159.06 9.76 L159.84 9.76 L160.39 8.39 L161.23 8.39 L161.6 15.11 L162.15 15.11 L162.51 10.19 L163.26 10.19 L163.78 11.92 L164.51 11.92 L164.95 12.48 L165.45 12.48 L165.87 8.71 L166.47 8.71 L166.9 10.7 L167.75 10.7 L168.29 7.63 L168.8 7.63 L169.12 10.69 L169.82 10.69 L170.2 13.57 L170.8 13.57 L171.25 10.35 L172.13 10.35 L172.48 3.1 L173.28 3.1 L173.7 8.02 L174.54 8.02 L175.08 7.25 L175.95 7.25 L176.47 18.07 L177.1 18.07 L177.68 18.07 L178.51 18.07 L178.82 18.07 L179.51 18.07 L180.1 18.07 L180.92 18.07 L181.43 18.07 L181.96 18.07 L182.52 6.56 L183.35 6.56 L183.68 5.43 L184.33 5.43 L184.63 6.13 L185.33 6.13 L185.81 11.21 L186.53 11.21 L186.92 4.6 L187.8 4.6 L188.33 7.16 L188.9 7.16 L189.45 5.05 L190.06 5.05 L190.44 6.05 L191.07 6.05 L191.66 8.66 L192.54 8.66 L192.96 8.52 L193.76 8.52 L194.25 1.21 L195.15 1.21 L195.49 12.48 L196.29 12.48 L196.7 11.02 L197.43 11.02 L197.88 11.06 L198.5 11.06 L199.1 8.88 L199.99 8.88 L200.3 10.71 L200.97 10.71 L201.34 4.69 L202.08 4.69 L202.43 10.38 L203.06 10.38 L203.53 7.57 L204.42 7.57 L204.85 10.95 L205.44 10.95 L205.9 11.58 L206.66 11.58 L207.08 6.26 L207.86 6.26 L208.43 6.4 L209.3 6.4 L209.86 11.97 L210.52 11.97 L210.95 11.09 L211.75 11.09 L212.23 10.16 L212.82 10.16 L213.27 9.33 L213.82 9.33 L214.33 10.58 L214.84 10.58 L215.22 6.43 L215.83 6.43 L216.15 8.69 L216.72 8.69 L217.09 18.07 L217.61 18.07 L218.02 18.07 L218.71 18.07 L219.25 18.07 L219.82 18.07 L220.14 8.44 L220.98 8.44 L221.4 7.21 L222.19 7.21 L222.57 7.92 L223.42 7.92 L223.75 8.67 L224.42 8.67 L224.9 13.31 L225.78 13.31 L226.24 5.43 L226.88 5.43 L227.47 7.02 L228.19 7.02 L228.69 7.35 L229.31 7.35 L229.8 12.84 L230.42 12.84 L230.91 10.2 L231.61 10.2 L232.08 6 L232.93 6 L233.27 7.07 L234.03 7.07 L234.62 11.06 L235.27 11.06 L235.79 9.68 L236.32 9.68 L236.81 11.91 L237.36 11.91 L237.83 10.67 L238.49 10.67 L239 10.62 L239.62 10.62 L239.95 9.35 L240.8 9.35 L241.15 8.16 L241.77 8.16 L242.25 7.57 L242.99 7.57 L243.44 8.37 L244.3 8.37 L244.64 6.23 L245.21 6.23 L245.69 11.94 L246.53 11.94 L246.87 6.84 L247.42 6.84 L247.76 5.57 L248.39 5.57 L248.92 4.98 L249.44 4.98 L249.78 9.78 L250.63 9.78 L251.18 6.95 L251.82 6.95 L252.39 11.05 L253.22 11.05 L253.57 8.68 L254.43 8.68 L254.89 7.83 L255.47 7.83 L256.03 18.07 L256.9 18.07 L257.38 18.07 L257.98 18.07 L258.41 18.07 L259.21 18.07 L259.74 18.07 L260.42 18.07 L260.74 18.07 L261.29 18.07 L261.66 10.17 L262.35 10.17 L262.66 9.68 L263.18 9.68 L263.64 11.43 L264.37 11.43 L264.74 12.48 L265.45 12.48 L265.82 5.16 L266.67 5.16 L267.17 12.87 L268.04 12.87 L268.42 10.93 L269.08 10.93 L269.46 12.11 L270.03 12.11 L270.34 10.64 L271.2 10.64 L271.56 10.21 L272.1 10.21 L272.42 11.88 L273.18 11.88 L273.52 9.32 L274.15 9.32 L274.71 10.29 L275.53 10.29 L276.05 7.99 L276.66 7.99 L276.98 6.99 L277.85 6.99 L278.28 1.02 L279.01 1.02 L279.47 10.76 L280.27 10.76 L280.78 11.69 L281.45 11.69 L281.78 1.1 L282.38 1.1 L282.82 10.47 L283.54 10.47 L283.9 1.13 L284.49 1.13 L284.88 9.7 L285.51 9.7 L286.01 10.88 L286.78 10.88 L287.33 11.24 L288.12 11.24 L288.5 9.32 L289.21 9.32 L289.67 9.18 L290.31 9.18 L290.67 7.09 L291.45 7.09 L291.81 9.55 L292.54 9.55 L293.11 1.02 L293.84 1.02 L294.25 7.14 L295.05 7.14 L295.53 6.56 L296.15 6.56 L296.47 8.03 L297.07 8.03 L297.56 18.07 L298.13 18.07 L298.63 18.07 L299.23 18.07 L299.57 18.07 L300.39 18.07 L300.97 18.07 L301.81 18.07 L302.32 7.97 L303.22 7.97 L303.62 8.21 L304.31 8.21 L304.74 5.92 L305.52 5.92 L305.87 5.3 L306.53 5.3 L306.9 7.26 L307.46 7.26 L308.04 8.56 L308.67 8.56 L309.02 10.04 L309.78 10.04 L310.23 8.93 L310.94 8.93 L311.46 7.13 L312.17 7.13 L312.64 1.02 L313.3 1.02 L313.84 1.02 L314.52 1.02 L314 20.3Z" fill="#1688b2"/></svg><div style="left:0;top:23.6px;width:314px;height:.6px;background:rgba(120,200,230,.22)"></div><div style="left:1.7px;top:1.3px;width:79.7px;height:8.6px;background:#164c63;border-radius:1.5px;overflow:hidden"><svg style="left:1.3px;top:1px" width="8" height="6.5" viewBox="0 0 8 6.5"><rect x="0.5" y="0.5" width="7" height="5.5" rx="1" fill="none" stroke="#e8f4f8" stroke-width=".9"/><path d="M2 4.4L3 2l1 2.4M5 2.6v1.8M5 3.4c.5-.8 1.4-.4 1.2 1" fill="none" stroke="#e8f4f8" stroke-width=".6"/></svg><div class="t" style="left:10.5px;top:.6px;height:8.6px;line-height:8.6px;font-size:6.3px;color:#dcebf0">老师改试卷时总用红笔...</div></div><div style="left:87.4px;top:1.3px;width:38.5px;height:8.6px;background:#164c63;border-radius:1.5px;overflow:hidden"><svg style="left:1.5px;top:.8px" width="7" height="7" viewBox="0 0 7 7"><circle cx="3.5" cy="3.5" r="2.9" fill="none" stroke="#e8f4f8" stroke-width=".9"/><path d="M3.5 3.5L5 2" stroke="#e8f4f8" stroke-width=".9"/></svg><div class="t" style="left:10px;top:.6px;height:8.6px;line-height:8.6px;font-size:6.3px;color:#dcebf0">变速 1.2X</div></div><div style="left:130.7px;top:1.3px;width:56px;height:8.6px;background:#164c63;border-radius:1.5px;overflow:hidden"><div class="t" style="left:2px;top:.6px;height:8.6px;line-height:8.6px;font-size:6.3px;color:#dcebf0">文本朗读 甜美解说</div></div></div>
<div style="left:86px;top:638.3px;width:886px;height:3px;background:#3a3a3a;border-radius:1.5px"></div>
<div style="left:614.2px;top:377px;width:1px;height:264px;background:#e6e6e6"></div>
<svg style="left:611.4px;top:368.9px;" width="6.6" height="9.2" viewBox="0 0 6.6 9.2"><path d="M1.3 0.6h4a.7.7 0 0 1 .7.7v4.5a2.7 2.7 0 0 1-5.4 0V1.3a.7.7 0 0 1 .7-.7Z" fill="#1d1d1d" stroke="#f0f0f0" stroke-width="1.2"/></svg>
<svg style="left:881.5px;top:556px" width="25.5" height="25.5" viewBox="0 0 25.5 25.5"><defs><clipPath id="avc"><circle cx="12.75" cy="12.75" r="11.4"/></clipPath></defs><circle cx="12.75" cy="12.75" r="12.3" fill="#fff"/><g clip-path="url(#avc)"><rect width="25.5" height="25.5" fill="#dfe6f6"/><path d="M5.8 15c-1-7 2-10.5 7-10.5s8 3.5 7 10.5c-.3 2-.8 3.5-1.5 4.5h-11c-.7-1-1.2-2.5-1.5-4.5Z" fill="#4a2f28"/><ellipse cx="12.75" cy="13.6" rx="4.6" ry="5" fill="#f3d3c4"/><path d="M8 12c1-3 3.5-4.3 6-4 1.8.3 3 1.7 3.6 4-1.5-1.3-3-2-4.6-2-2 0-3.8.8-5 2Z" fill="#4a2f28"/><circle cx="10.8" cy="14" r=".9" fill="#2a1a1a"/><circle cx="14.7" cy="14" r=".9" fill="#2a1a1a"/><path d="M11.8 16.7h1.9" stroke="#c0605a" stroke-width=".7"/><path d="M7 25.5c.5-3.5 2.5-5 5.75-5s5.25 1.5 5.75 5Z" fill="#e8b8b0"/></g></svg>
</body></html>
